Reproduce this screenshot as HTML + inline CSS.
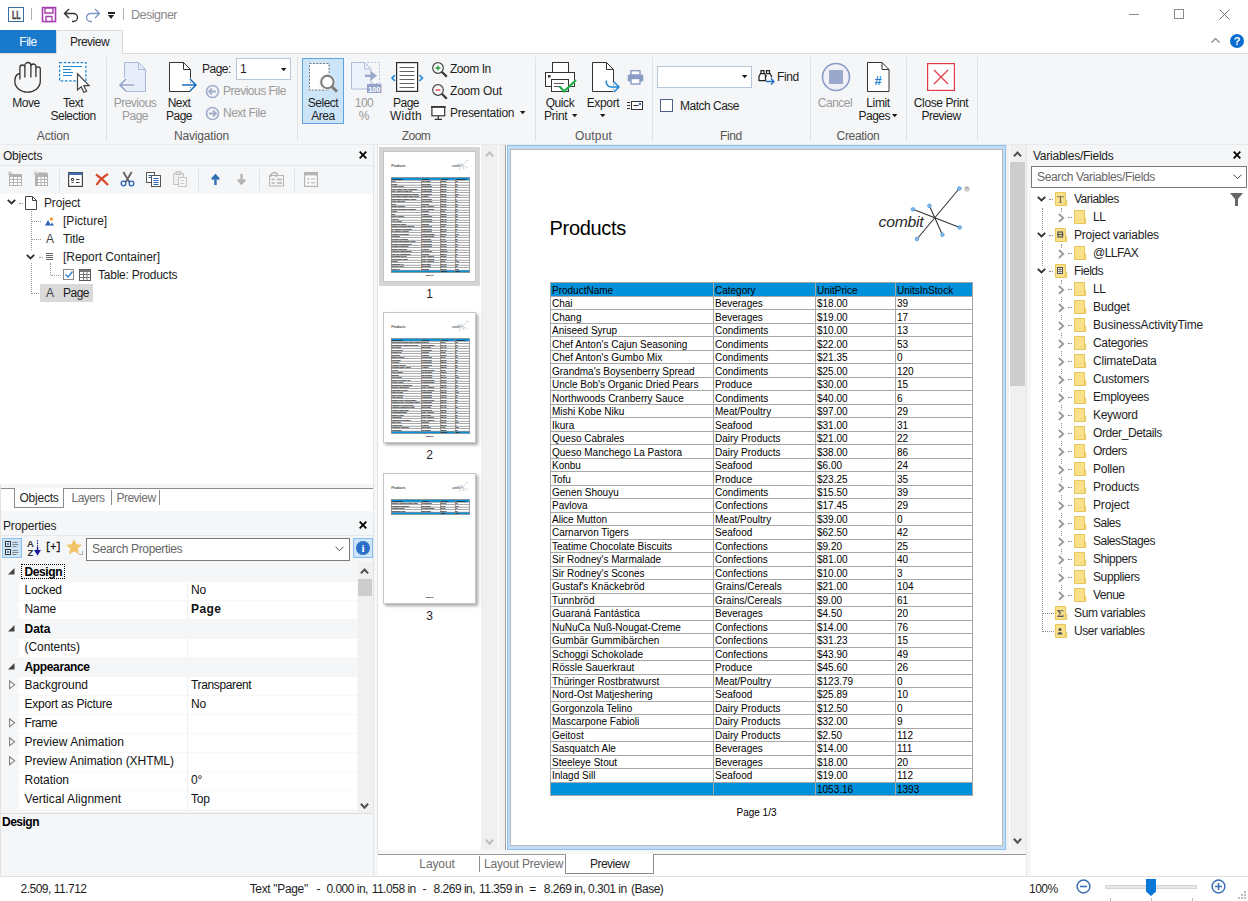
<!DOCTYPE html>
<html><head><meta charset="utf-8"><title>Designer</title>
<style>
*{box-sizing:border-box;margin:0;padding:0}
html,body{width:1248px;height:901px;overflow:hidden;background:#fff}
body{position:relative;font-family:"Liberation Sans",sans-serif;font-size:12px;color:#1e1e1e;letter-spacing:-0.2px}
.a{position:absolute}
.t{position:absolute;white-space:nowrap;line-height:14px}
.c{text-align:center}
.g{color:#9a9a9a}
svg{position:absolute;overflow:visible}
.b{font-weight:bold}
</style></head><body>
<!-- title bar -->
<div class="a" style="left:0;top:0;width:1248px;height:30px;background:#fff"></div>
<div class="a" style="left:8px;top:7px;width:16px;height:15px;border:1px solid #3b6ea5;background:#fff"></div>
<div class="t b" style="letter-spacing:0.6px;left:12px;top:8.500px;font-size:10.500px;line-height:13px;letter-spacing:0;color:#4a4a4a;transform:scaleX(.68);transform-origin:0 0;-webkit-text-stroke:.4px #4a4a4a">LL</div>
<div class="a" style="left:31px;top:8px;width:1px;height:12px;background:#b0b0b0"></div>
<svg style="left:42px;top:7px" width="14" height="15" viewBox="0 0 14 15"><path d="M.5.5h13v14H.5z" fill="#fff" stroke="#a63fb0" stroke-width="1.6"/><path d="M3 1h8v5H3z" fill="#fff" stroke="#a63fb0" stroke-width="1.4"/><path d="M4 9.5h6v5H4z" fill="#fff" stroke="#a63fb0" stroke-width="1.4"/></svg>
<svg style="left:63px;top:8px" width="16" height="14" viewBox="0 0 16 14"><path d="M6 1L1.5 5.5 6 10M2 5.500h8.500a4 4 0 0 1 0 8H9" fill="none" stroke="#333" stroke-width="1.4"/></svg>
<svg style="left:85px;top:8px" width="16" height="14" viewBox="0 0 16 14"><path d="M10 1l4.500 4.500L10 10M14 5.500H5.500a4 4 0 0 0 0 8H7" fill="none" stroke="#7f98c4" stroke-width="1.4"/></svg>
<div class="a" style="left:108px;top:12px;width:7px;height:1.5px;background:#222"></div>
<div class="a" style="left:108px;top:15px;width:0;height:0;border-left:3.5px solid transparent;border-right:3.5px solid transparent;border-top:4px solid #222"></div>
<div class="a" style="left:123px;top:8px;width:1px;height:12px;background:#b0b0b0"></div>
<div class="t" style="letter-spacing:-0.5px;left:131px;top:8px;color:#8a8a8a;font-size:12.500px">Designer</div>
<!-- window buttons -->
<div class="a" style="left:1129px;top:14px;width:10px;height:1px;background:#8a8a8a"></div>
<div class="a" style="left:1174px;top:9px;width:10px;height:10px;border:1px solid #8a8a8a"></div>
<svg style="left:1219px;top:9px" width="11" height="11" viewBox="0 0 11 11"><path d="M.5.5l10 10M10.500.5l-10 10" stroke="#777" stroke-width="1"/></svg>
<!-- tabs row -->
<div class="a" style="left:0;top:30px;width:56px;height:23px;background:#1979ca"></div>
<div class="t c" style="letter-spacing:-0.5px;left:0;top:35px;width:56px;color:#fff">File</div>
<div class="a" style="left:0;top:53px;width:1248px;height:92px;background:#f5f6f7;border-top:1px solid #dadbdc;border-bottom:1px solid #e9eaeb"></div>
<div class="a" style="left:56px;top:30px;width:67px;height:24px;background:#f5f6f7;border:1px solid #dadbdc;border-bottom:none"></div>
<div class="t c" style="letter-spacing:-0.5px;left:56px;top:35px;width:67px">Preview</div>
<svg style="left:1211px;top:37px" width="9" height="6" viewBox="0 0 9 6"><path d="M.5 5.500l4-4 4 4" fill="none" stroke="#888" stroke-width="1.200"/></svg>
<div class="a" style="left:1230px;top:34px;width:14px;height:14px;border-radius:7px;background:#0a6ccf"></div>
<div class="t b c" style="left:1230px;top:34px;width:14px;color:#fff;font-size:11px">?</div>
<!-- ribbon separators -->
<div class="a" style="left:106px;top:57px;width:1px;height:84px;background:#e1e2e3"></div>
<div class="a" style="left:297px;top:57px;width:1px;height:84px;background:#e1e2e3"></div>
<div class="a" style="left:535px;top:57px;width:1px;height:84px;background:#e1e2e3"></div>
<div class="a" style="left:652px;top:57px;width:1px;height:84px;background:#e1e2e3"></div>
<div class="a" style="left:810px;top:57px;width:1px;height:84px;background:#e1e2e3"></div>
<div class="a" style="left:906px;top:57px;width:1px;height:84px;background:#e1e2e3"></div>
<div class="a" style="left:977px;top:57px;width:1px;height:84px;background:#e1e2e3"></div>
<!-- group labels -->
<div class="t c" style="letter-spacing:-0.172px;left:0;top:129px;width:106px;color:#555">Action</div>
<div class="t c" style="letter-spacing:-0.189px;left:106px;top:129px;width:191px;color:#555">Navigation</div>
<div class="t c" style="letter-spacing:-0.5px;left:297px;top:129px;width:238px;color:#555">Zoom</div>
<div class="t c" style="letter-spacing:0.134px;left:535px;top:129px;width:117px;color:#555">Output</div>
<div class="t c" style="letter-spacing:-0.381px;left:652px;top:129px;width:158px;color:#555">Find</div>
<div class="t c" style="letter-spacing:-0.308px;left:810px;top:129px;width:96px;color:#555">Creation</div>
<!-- Action -->
<svg style="left:13.500px;top:61.500px" width="27" height="31" viewBox="0 0 27 31"><path d="M5.900 17V5.500a2.500 2.500 0 0 1 5 0M10.900 15V3.500a3 3 0 0 1 6 0V15M16.900 4.500a2.500 2.500 0 0 1 5 0V14.500M21.900 7a2.200 2.200 0 0 1 4.400 0V19C26.300 26 20 30.200 13.500 30.200C7 30.200.8 26 .8 19Q1 12.500 5.500 11.500" fill="none" stroke="#333" stroke-width="1.300" stroke-linecap="round"/></svg>
<div class="t c" style="letter-spacing:-0.5px;left:0;top:96px;width:52px">Move</div>
<svg style="left:59px;top:62px" width="32" height="32" viewBox="0 0 32 32"><rect x=".6" y=".6" width="26.300" height="18.300" fill="#fff" stroke="#1e86d0" stroke-width="1.200" stroke-dasharray="2.600 1.600"/><path d="M4 4.500h19M4 7.500h8M4 10.500h10M4 13.500h9" stroke="#1e86d0" stroke-width="1.100"/><path d="M18.500 11.800v16.200l3.700-3.200 2.700 5.700 2.700-1.300-2.800-5.500h5.300z" fill="#fff" stroke="#444" stroke-width="1.200"/></svg>
<div class="t c" style="letter-spacing:-0.5px;left:46px;top:96px;width:54px">Text</div>
<div class="t c" style="letter-spacing:-0.459px;left:46px;top:109px;width:54px">Selection</div>
<!-- Navigation -->
<svg style="left:118px;top:62px" width="30" height="31" viewBox="0 0 30 31"><path d="M6.500.5h14l7 7v22h-21z" fill="#e6ecf8" stroke="#a9b9da"/><path d="M20.500.5v7h7" fill="none" stroke="#a9b9da"/><path d="M16 23H2M8 17l-6 6 6 6" fill="none" stroke="#f5f6f7" stroke-width="4"/><path d="M16 23H2M8 17l-6 6 6 6" fill="none" stroke="#8fa3cc" stroke-width="1.600"/></svg>
<div class="t c g" style="letter-spacing:-0.5px;left:108px;top:96px;width:54px">Previous</div>
<div class="t c g" style="letter-spacing:-0.5px;left:108px;top:109px;width:54px">Page</div>
<svg style="left:168px;top:62px" width="30" height="31" viewBox="0 0 30 31"><path d="M1.500.5h14l7 7v22h-21z" fill="#fff" stroke="#333"/><path d="M15.500.5v7h7" fill="none" stroke="#333"/><path d="M14 23h14M22 17l6 6-6 6" fill="none" stroke="#fff" stroke-width="4"/><path d="M14 23h14M22 17l6 6-6 6" fill="none" stroke="#1e6fc0" stroke-width="1.600"/></svg>
<div class="t c" style="letter-spacing:-0.5px;left:158px;top:96px;width:42px">Next</div>
<div class="t c" style="letter-spacing:-0.5px;left:158px;top:109px;width:42px">Page</div>
<div class="t" style="letter-spacing:-0.5px;left:202px;top:62px">Page:</div>
<div class="a" style="left:236px;top:58px;width:55px;height:22px;background:#fff;border:1px solid #b8c6dc"></div>
<div class="t" style="left:240px;top:62px">1</div>
<svg style="left:281px;top:68px" width="6" height="4" viewBox="0 0 6 4"><path d="M0 0h5.400L2.700 3.200z" fill="#1a1a1a"/></svg>
<svg style="left:205.500px;top:84.500px" width="13" height="13" viewBox="0 0 13 13"><circle cx="6.500" cy="6.500" r="6" fill="none" stroke="#a3aecb" stroke-width="1.700"/><path d="M10 6.500H3.500M6 3.500l-3 3 3 3" fill="none" stroke="#a3aecb" stroke-width="1.800"/></svg>
<div class="t g" style="letter-spacing:-0.5px;left:223px;top:84px">Previous File</div>
<svg style="left:205.500px;top:106.500px" width="13" height="13" viewBox="0 0 13 13"><circle cx="6.500" cy="6.500" r="6" fill="none" stroke="#a3aecb" stroke-width="1.700"/><path d="M3 6.500h6.500M7 3.500l3 3-3 3" fill="none" stroke="#a3aecb" stroke-width="1.800"/></svg>
<div class="t g" style="letter-spacing:-0.5px;left:223px;top:106px">Next File</div>
<!-- Zoom -->
<div class="a" style="left:302px;top:58px;width:42px;height:66px;background:#cce4f7;border:1px solid #5fa3e0"></div>
<svg style="left:309px;top:63px" width="30" height="30" viewBox="0 0 30 30"><rect x=".5" y=".5" width="19.500" height="26.500" fill="#fff" stroke="#666" stroke-width=".9" stroke-dasharray="2 1.400"/><circle cx="18.400" cy="19" r="6.200" fill="#fff" stroke="#e8eef5" stroke-opacity=".8" stroke-width="4"/><circle cx="18.400" cy="19" r="6.200" fill="#fff" stroke="#7a7a7a" stroke-width="2"/><path d="M23 23.800l5 5" stroke="#7a7a7a" stroke-width="3"/></svg>
<div class="t c" style="letter-spacing:-0.5px;left:302px;top:96px;width:42px">Select</div>
<div class="t c" style="letter-spacing:-0.5px;left:302px;top:109px;width:42px">Area</div>
<svg style="left:351px;top:62px" width="31" height="32" viewBox="0 0 31 32"><rect x="16" y=".5" width="12.500" height="21" fill="none" stroke="#b5c0dc" stroke-dasharray="2 1.500"/><path d="M.5.500h13l6.500 6.500v20H.5z" fill="#eef2fb" stroke="#b0bcdc"/><path d="M13.500.5v6.500h6.500" fill="none" stroke="#b0bcdc"/><path d="M14 13.800h8" stroke="#9aa9cc" stroke-width="2.400"/><path d="M19.500 8.800l6.500 5-6.500 5z" fill="#9aa9cc"/><rect x="16" y="22" width="14.500" height="9" fill="#92a2c8"/><text x="23.300" y="29.700" font-size="8" font-weight="bold" fill="#fff" text-anchor="middle" font-family="Liberation Sans,sans-serif" textLength="12" lengthAdjust="spacingAndGlyphs">100</text></svg>
<div class="t c g" style="letter-spacing:-0.5px;left:344px;top:96px;width:40px">100</div>
<div class="t c g" style="left:344px;top:109px;width:40px">%</div>
<svg style="left:390px;top:62px" width="33" height="31" viewBox="0 0 33 31"><rect x="6.600" y=".6" width="21" height="28.800" fill="#fff" stroke="#2a2a2a" stroke-width="1.200"/><path d="M9.500 5.500h15M9.500 9.500h15M9.500 13.500h15M9.500 17.500h15M9.500 21.500h15M9.500 25.500h15" stroke="#666"/><path d="M5 13.200l-3 2.800 3 2.800M29.500 13.200l3 2.800-3 2.800" fill="none" stroke="#1e88d8" stroke-width="1.600"/></svg>
<div class="t c" style="letter-spacing:-0.5px;left:386px;top:96px;width:40px">Page</div>
<div class="t c" style="letter-spacing:0.253px;left:386px;top:109px;width:40px">Width</div>
<svg style="left:431.500px;top:61.700px" width="16" height="16" viewBox="0 0 16 16"><circle cx="6" cy="6" r="5.300" fill="#fff" stroke="#444" stroke-width="1.200"/><path d="M9.800 9.800l5 5" stroke="#333" stroke-width="2.200"/><path d="M3.500 6h5M6 3.500v5" stroke="#1e9e3a" stroke-width="1.300"/></svg>
<div class="t" style="letter-spacing:-0.469px;left:450px;top:62px">Zoom In</div>
<svg style="left:431.500px;top:83.700px" width="16" height="16" viewBox="0 0 16 16"><circle cx="6" cy="6" r="5.300" fill="#fff" stroke="#444" stroke-width="1.200"/><path d="M9.800 9.800l5 5" stroke="#333" stroke-width="2.200"/><path d="M3.500 6h5" stroke="#e03030" stroke-width="1.300"/></svg>
<div class="t" style="letter-spacing:-0.194px;left:450px;top:84px">Zoom Out</div>
<svg style="left:431.300px;top:106px" width="15" height="15" viewBox="0 0 15 15"><rect x=".9" y=".8" width="12.800" height="9" fill="#fff" stroke="#333" stroke-width="1.200"/><path d="M0 .9h14.600" stroke="#333" stroke-width="1.700"/><path d="M7.300 10v3.400M3.700 13.400h7.300" stroke="#333" stroke-width="1.200"/></svg>
<div class="t" style="letter-spacing:-0.263px;left:450px;top:106px">Presentation</div>
<svg style="left:519.700px;top:111px" width="6" height="4" viewBox="0 0 6 4"><path d="M0 0h5.400L2.700 3.200z" fill="#1a1a1a"/></svg>
<!-- Output -->
<svg style="left:545px;top:62px" width="32" height="31" viewBox="0 0 32 31"><rect x="7.500" y=".5" width="16" height="10" fill="#fff" stroke="#333"/><rect x=".5" y="10.500" width="29" height="14" fill="#fff" stroke="#333"/><rect x="3" y="13" width="2.500" height="2.500" fill="#333"/><rect x="6.500" y="17.500" width="17" height="12" fill="#fff" stroke="#333"/><path d="M9 21.500h10M9 24.500h7" stroke="#555"/><path d="M14.500 24.500l4.800 4.800L31 18" fill="none" stroke="#27ae4a" stroke-width="2.300"/></svg>
<div class="t c" style="letter-spacing:-0.422px;left:536px;top:96px;width:48px">Quick</div>
<div class="t" style="letter-spacing:-0.247px;left:544px;top:109px">Print</div>
<svg style="left:571.500px;top:114px" width="6" height="4" viewBox="0 0 6 4"><path d="M0 0h5.400L2.700 3.200z" fill="#1a1a1a"/></svg>
<svg style="left:591px;top:62px" width="30" height="31" viewBox="0 0 30 31"><path d="M1.500.5h14l7 7v22h-21z" fill="#fff" stroke="#333"/><path d="M15.500.5v7h7" fill="none" stroke="#333"/><path d="M15.300 18.500v1.500a5 5 0 0 0 5 5h7.500M23 20l5 5-5 5" fill="none" stroke="#f5f6f7" stroke-width="4"/><path d="M15.300 18.500v1.500a5 5 0 0 0 5 5h7.500M23 20l5 5-5 5" fill="none" stroke="#1e88d8" stroke-width="1.500"/></svg>
<div class="t c" style="letter-spacing:-0.337px;left:582px;top:96px;width:42px">Export</div>
<svg style="left:600px;top:114px" width="6" height="4" viewBox="0 0 6 4"><path d="M0 0h5.400L2.700 3.200z" fill="#1a1a1a"/></svg>
<svg style="left:627px;top:70px" width="17" height="15" viewBox="0 0 17 15"><rect x="4" y=".7" width="9" height="4.500" fill="#fff" stroke="#8a9bc4" stroke-width="1.400"/><rect x=".7" y="4.500" width="15.600" height="7" rx="1.500" fill="#8a9bc4"/><rect x="4" y="8.500" width="9" height="5.500" fill="#fff" stroke="#8a9bc4" stroke-width="1.400"/></svg>
<svg style="left:627px;top:100px" width="17" height="11" viewBox="0 0 17 11"><rect x="4.500" y="1.500" width="11" height="8" fill="#fff" stroke="#333"/><path d="M0 2.500h3M0 5.500h3M0 8.500h3M6.500 5.500h5" stroke="#333"/><rect x="12" y="3" width="2" height="2" fill="#1e6fc0"/></svg>
<!-- Find -->
<div class="a" style="left:657px;top:66px;width:95px;height:22px;background:#fff;border:1px solid #b8c6dc"></div>
<svg style="left:742px;top:75px" width="6" height="4" viewBox="0 0 6 4"><path d="M0 0h5.400L2.700 3.200z" fill="#1a1a1a"/></svg>
<svg style="left:758px;top:69px" width="17" height="16" viewBox="0 0 17 16"><path d="M3 1.500h3v3H3zM8.500 1.500h3v3h-3zM2.500 4.500h4l1 2v5h-6.500v-4zM8 4.500h4l1.500 3v1" fill="#fff" stroke="#222" stroke-width="1.250"/><path d="M7.500 7h1.500" stroke="#222"/><path d="M8 12.500h8M13 9.500l3 3-3 3" fill="none" stroke="#1e6fc0" stroke-width="1.300"/></svg>
<div class="t" style="letter-spacing:-0.381px;left:777px;top:70px">Find</div>
<div class="a" style="left:660px;top:99px;width:13px;height:13px;background:#fff;border:1px solid #4a5f8a"></div>
<div class="t" style="letter-spacing:-0.5px;left:680px;top:99px">Match Case</div>
<!-- Creation -->
<svg style="left:821px;top:62px" width="30" height="30" viewBox="0 0 30 30"><circle cx="15" cy="15" r="13.500" fill="#f0f2f8" stroke="#8a9bc4" stroke-width="1.600"/><rect x="8" y="8" width="14" height="14" fill="#9aa8cc"/></svg>
<div class="t c g" style="letter-spacing:-0.5px;left:812px;top:96px;width:46px">Cancel</div>
<svg style="left:867px;top:62px" width="23" height="31" viewBox="0 0 23 31"><path d="M.5.500h14.500l7 7v22H.5z" fill="#fff" stroke="#333"/><path d="M15 .5v7h7" fill="none" stroke="#333"/><text x="11" y="23" font-size="13" font-weight="bold" fill="#1e7fd0" text-anchor="middle" font-family="Liberation Sans,sans-serif">#</text></svg>
<div class="t c" style="letter-spacing:-0.411px;left:856px;top:96px;width:44px">Limit</div>
<div class="t" style="letter-spacing:-0.5px;left:858.500px;top:109px">Pages</div>
<svg style="left:892.200px;top:114px" width="6" height="4" viewBox="0 0 6 4"><path d="M0 0h5.400L2.700 3.200z" fill="#1a1a1a"/></svg>
<svg style="left:927px;top:63px" width="28" height="28" viewBox="0 0 28 28"><rect x=".6" y=".6" width="26.800" height="26.800" fill="#fff" stroke="#e03c4c" stroke-width="1.200"/><path d="M7 7l14 14M21 7L7 21" stroke="#e03c4c" stroke-width="1.300"/></svg>
<div class="t c" style="letter-spacing:-0.399px;left:908px;top:96px;width:66px">Close Print</div>
<div class="t c" style="letter-spacing:-0.5px;left:908px;top:109px;width:66px">Preview</div>
<!-- workspace bg -->
<div class="a" style="left:0;top:145px;width:1248px;height:732px;background:#f0f0f0"></div>
<!-- Objects panel -->
<div class="a" style="left:0;top:145px;width:374px;height:339px;background:#fff;border-right:1px solid #e3e4e6"></div>
<div class="a" style="left:0;top:145px;width:373px;height:21px;background:#f5f6f7"></div>
<div class="t" style="letter-spacing:-0.215px;left:3px;top:149px">Objects</div>
<svg style="left:359px;top:151px" width="8" height="8" viewBox="0 0 8 8"><path d="M.7.7l6.600 6.600M7.300.7L.7 7.300" stroke="#000" stroke-width="1.800"/></svg>
<div class="a" style="left:0;top:165px;width:373px;height:29px;background:#f5f6f7;border-top:1px solid #e6e7e8"></div>
<!-- toolbar icons -->
<svg style="left:7px;top:171px" width="16" height="16" viewBox="0 0 16 16"><rect x="2.500" y="3.500" width="12" height="11" fill="#fff" stroke="#b2b2b2"/><rect x="2.500" y="3.500" width="12" height="2.500" fill="#b2b2b2"/><path d="M2.500 8.500h12M2.500 11.500h12M6.500 6v8.500M10.500 6v8.500" stroke="#b2b2b2"/><path d="M3 0v5M.5 2.500h5M1.200.8l3.600 3.400M4.800.8L1.200 4.200" stroke="#bcbcbc" stroke-width=".7"/></svg>
<svg style="left:33px;top:171px" width="16" height="16" viewBox="0 0 16 16"><rect x="2.500" y="3.500" width="12" height="11" fill="#fff" stroke="#b2b2b2"/><rect x="5" y="1.500" width="9.500" height="2" fill="#b2b2b2"/><rect x="2.500" y="3.500" width="12" height="2.500" fill="#b2b2b2"/><rect x="2.500" y="3.500" width="2.500" height="11" fill="#b2b2b2"/><path d="M2.500 8.500h12M2.500 11.500h12M8 6v8.500M11.500 6v8.500" stroke="#b2b2b2"/><path d="M3 0v5M.5 2.500h5M1.200.8l3.600 3.400M4.800.8L1.200 4.200" stroke="#bcbcbc" stroke-width=".7"/></svg>
<div class="a" style="left:59px;top:169px;width:1px;height:22px;background:#e1e2e3"></div>
<svg style="left:68px;top:172px" width="15" height="15" viewBox="0 0 15 15"><rect x=".6" y=".6" width="13.800" height="13.800" fill="#fff" stroke="#444" stroke-width="1.200"/><rect x=".6" y=".6" width="13.800" height="2.400" fill="#3f6fb0"/><path d="M3.500 6.500h2v2h-2zM3.500 10.500h2M8 7.500h3.500M8 10.500h3.500" fill="none" stroke="#444"/></svg>
<svg style="left:95px;top:173px" width="14" height="13" viewBox="0 0 14 13"><path d="M1 1.500c4 2.500 8 6 12 10.500M13 1C8 4 4 8 1.500 12" fill="none" stroke="#d9482b" stroke-width="2.200"/></svg>
<svg style="left:120px;top:171px" width="15" height="16" viewBox="0 0 15 16"><path d="M3.300 1l6 10M11.700 1l-6 10" stroke="#666" stroke-width="1.900"/><circle cx="3.500" cy="12.500" r="2.300" fill="none" stroke="#2a62b8" stroke-width="1.300"/><circle cx="11.500" cy="12.500" r="2.300" fill="none" stroke="#2a62b8" stroke-width="1.300"/></svg>
<svg style="left:146px;top:172px" width="16" height="15" viewBox="0 0 16 15"><rect x=".5" y=".5" width="8" height="10" fill="#fff" stroke="#555"/><path d="M2.500 3.500h4M2.500 5.500h4" stroke="#2a62b8"/><rect x="5.500" y="3.500" width="9" height="11" fill="#fff" stroke="#555"/><path d="M7.500 6.500h5M7.500 8.500h5M7.500 10.500h5M7.500 12.500h5" stroke="#2a62b8"/></svg>
<svg style="left:173px;top:171px" width="14" height="16" viewBox="0 0 14 16"><rect x=".5" y="2.500" width="10" height="11" fill="#eee" stroke="#c4c4c4"/><rect x="3" y=".5" width="5" height="3" fill="#ddd" stroke="#c4c4c4"/><rect x="5.500" y="6.500" width="8" height="9" fill="#f6f6f6" stroke="#c4c4c4"/><path d="M7.500 9.500h4M7.500 12.500h4" stroke="#ccc"/></svg>
<div class="a" style="left:198px;top:169px;width:1px;height:22px;background:#e1e2e3"></div>
<svg style="left:210.500px;top:174px" width="9" height="11" viewBox="0 0 9 11"><path d="M4.500 11V2.500M1 5.400L4.500 1.600 8 5.400" fill="none" stroke="#2f6db5" stroke-width="2.400"/></svg>
<svg style="left:236.500px;top:174px" width="9" height="11" viewBox="0 0 9 11"><path d="M4.500 0v8.500M1 5.600L4.500 9.400 8 5.600" fill="none" stroke="#b4b4b4" stroke-width="2.400"/></svg>
<div class="a" style="left:259px;top:169px;width:1px;height:22px;background:#e1e2e3"></div>
<svg style="left:269px;top:171px" width="16" height="16" viewBox="0 0 16 16"><rect x=".5" y="4.500" width="14" height="10.500" fill="#f4f4f4" stroke="#b4b4b4"/><path d="M1.500 6a4 4 0 0 1 6.500-3.500" fill="none" stroke="#b4b4b4" stroke-width="1.300"/><path d="M5.500 1.500l3 1.500-1.500 3" fill="none" stroke="#b4b4b4" stroke-width="1.300"/><path d="M2.500 8.500h3M8 8.500h5M2.500 12h3M8 12h5" stroke="#b4b4b4" stroke-width="1.600"/></svg>
<div class="a" style="left:294px;top:169px;width:1px;height:22px;background:#e1e2e3"></div>
<svg style="left:304px;top:172px" width="15" height="15" viewBox="0 0 15 15"><rect x=".6" y=".6" width="12.800" height="13.800" fill="#fafafa" stroke="#b4b4b4" stroke-width="1.200"/><rect x=".6" y=".6" width="12.800" height="2.800" fill="#b4b4b4"/><circle cx="4.300" cy="7" r="1" fill="#b4b4b4"/><circle cx="4.300" cy="10.800" r=".9" fill="none" stroke="#b4b4b4" stroke-width=".7"/><path d="M7 7h4M7 10.800h4" stroke="#b4b4b4"/></svg>
<!-- tree -->
<svg style="left:7px;top:199px" width="9" height="6" viewBox="0 0 9 6"><path d="M.8.800l3.700 3.700L8.200.8" fill="none" stroke="#333" stroke-width="1.900"/></svg>
<svg style="left:25px;top:196px" width="12" height="14" viewBox="0 0 12 14"><path d="M.5.500h7l4 4v9H.5z" fill="#fff" stroke="#444"/><path d="M7.500.5v4h4" fill="none" stroke="#444"/></svg>
<div class="t" style="letter-spacing:-0.177px;left:44px;top:196px">Project</div>
<div class="a" style="left:31px;top:211px;width:0;height:83px;border-left:1px dotted #9a9a9a"></div>
<div class="a" style="left:19px;top:203px;width:4px;height:0;border-top:1px dotted #9a9a9a"></div>
<div class="a" style="left:32px;top:221px;width:9px;height:0;border-top:1px dotted #9a9a9a"></div>
<div class="a" style="left:32px;top:239px;width:9px;height:0;border-top:1px dotted #9a9a9a"></div>
<div class="a" style="left:39px;top:257px;width:4px;height:0;border-top:1px dotted #9a9a9a"></div>
<div class="a" style="left:32px;top:293px;width:9px;height:0;border-top:1px dotted #9a9a9a"></div>
<svg style="left:45px;top:217px" width="9" height="9" viewBox="0 0 9 9"><circle cx="6.500" cy="2" r="1.700" fill="#f0a030"/><path d="M0 8.500L3 3l3 5.500z" fill="#2a62b8"/><path d="M5 8.500L7 5.500l2 3z" fill="#2a62b8"/></svg>
<div class="t" style="letter-spacing:0.023px;left:63px;top:214px">[Picture]</div>
<div class="t" style="left:46px;top:232px;color:#444">A</div>
<div class="t" style="letter-spacing:-0.159px;left:63px;top:232px">Title</div>
<div class="a" style="left:25px;top:251px;width:11px;height:11px;background:#fff"></div><svg style="left:26px;top:254px" width="9" height="6" viewBox="0 0 9 6"><path d="M.8.800l3.700 3.700L8.200.8" fill="none" stroke="#333" stroke-width="1.900"/></svg>
<svg style="left:46px;top:253px" width="8" height="8" viewBox="0 0 8 8"><path d="M0 .5h7M0 2.500h7M0 4.500h7M0 6.500h7" stroke="#555" stroke-width=".9"/></svg>
<div class="t" style="letter-spacing:-0.057px;left:63px;top:250px">[Report Container]</div>
<div class="a" style="left:50px;top:263px;width:0;height:12px;border-left:1px dotted #9a9a9a"></div>
<div class="a" style="left:51px;top:275px;width:10px;height:0;border-top:1px dotted #9a9a9a"></div>
<div class="a" style="left:63px;top:269px;width:11px;height:11px;background:#fff;border:1px solid #8a8a8a"></div>
<svg style="left:65px;top:271px" width="8" height="7" viewBox="0 0 8 7"><path d="M.5 3.500l2.500 2.500L7.500.5" fill="none" stroke="#2a7fd8" stroke-width="1.300"/></svg>
<svg style="left:79px;top:269px" width="12" height="12" viewBox="0 0 12 12"><rect x=".5" y=".5" width="11" height="11" fill="#fff" stroke="#555"/><rect x=".5" y=".5" width="11" height="2.500" fill="#777"/><path d="M.5 5.500h11M.5 8.500h11M4.500 3v8.500M8 3v8.500" stroke="#777"/></svg>
<div class="t" style="letter-spacing:-0.23px;left:98px;top:268px">Table: Products</div>
<div class="a" style="left:40px;top:284px;width:53px;height:18px;background:#d9d9d9"></div>
<div class="t" style="left:46px;top:286px;color:#444">A</div>
<div class="t" style="letter-spacing:-0.5px;left:63px;top:286px">Page</div>
<!-- objects tabs -->
<div class="a" style="left:0;top:484px;width:374px;height:27px;background:#fff;border-right:1px solid #e3e4e6"></div>
<div class="a" style="left:0;top:484px;width:373px;height:4px;background:#f5f6f7"></div>
<div class="a" style="left:0;top:488px;width:373px;height:1px;background:#8c8c8c"></div>
<div class="a" style="left:14px;top:488px;width:50px;height:20px;background:#fff;border:1px solid #8c8c8c;border-top:none"></div>
<div class="t c" style="letter-spacing:-0.215px;left:14px;top:491px;width:50px">Objects</div>
<div class="t c" style="letter-spacing:-0.5px;left:66px;top:491px;width:44px;color:#6e6e6e">Layers</div>
<div class="a" style="left:111px;top:490px;width:1px;height:15px;background:#8c8c8c"></div>
<div class="t c" style="letter-spacing:-0.5px;left:113px;top:491px;width:46px;color:#6e6e6e">Preview</div>
<div class="a" style="left:159px;top:490px;width:1px;height:15px;background:#8c8c8c"></div>
<!-- Properties panel -->
<div class="a" style="left:0;top:514px;width:374px;height:362px;background:#f5f6f7;border-right:1px solid #e3e4e6"></div>
<div class="a" style="left:0;top:511px;width:374px;height:3px;background:#f5f6f7"></div>
<div class="t" style="letter-spacing:-0.134px;left:3px;top:519px">Properties</div>
<svg style="left:359px;top:521px" width="8" height="8" viewBox="0 0 8 8"><path d="M.7.700l6.600 6.600M7.300.7L.7 7.300" stroke="#000" stroke-width="1.800"/></svg>
<div class="a" style="left:0;top:535px;width:373px;height:1px;background:#e6e7e8"></div>
<div class="a" style="left:2px;top:538px;width:20px;height:20px;background:#cce4f7;border:1px solid #8cc0ee"></div>
<svg style="left:5px;top:541px" width="15" height="14" viewBox="0 0 15 14"><rect x=".5" y=".5" width="5" height="5" fill="#fff" stroke="#333"/><rect x=".5" y="8.500" width="5" height="5" fill="#fff" stroke="#333"/><path d="M1.500 3h3M3 1.500v3M1.500 11h3M3 9.500v3" stroke="#2a62b8"/><path d="M7.500 1.500h5M7.500 3.500h6M7.500 5.500h4M7.500 9.500h5M7.500 11.500h6M7.500 13.500h4" stroke="#777" stroke-width=".9"/></svg>
<div class="t b" style="left:27px;top:540px;font-size:9.500px;line-height:8px;color:#333;letter-spacing:0">A</div><div class="t b" style="left:27.500px;top:548.500px;font-size:9.500px;line-height:8px;color:#333;letter-spacing:0">Z</div>
<svg style="left:34px;top:540px" width="7" height="16" viewBox="0 0 7 16"><path d="M3.500 0v8" stroke="#1a1a9a" stroke-width="1" stroke-dasharray="1.500 1"/><path d="M3.500 7v7" stroke="#1a1a9a" stroke-width="1.500"/><path d="M0 10l3.500 5.500L7 10z" fill="#1a1a9a"/></svg>
<div class="t b" style="left:45px;top:541px;font-size:10px;line-height:13px;font-weight:normal;-webkit-text-stroke:.3px #111;font-family:'Liberation Mono',monospace;letter-spacing:-.7px;color:#111">[+]</div>
<svg style="left:66px;top:539px" width="18" height="17" viewBox="0 0 18 17"><path d="M8 0l2.400 5.200 5.600.6-4.200 3.800 1.200 5.600L8 12.400 3 15.200l1.200-5.600L0 5.800l5.600-.6z" fill="#f2c46a"/><path d="M13 15.500h3.500V12" fill="none" stroke="#999" stroke-width=".8"/></svg>
<div class="a" style="left:86px;top:538px;width:264px;height:23px;background:#fff;border:1px solid #7a7a7a"></div>
<div class="t" style="letter-spacing:-0.34px;left:92px;top:542px;color:#666">Search Properties</div>
<svg style="left:335px;top:546px" width="9" height="6" viewBox="0 0 9 6"><path d="M.5.700l4 4 4-4" fill="none" stroke="#444" stroke-width="1"/></svg>
<div class="a" style="left:353px;top:538px;width:20px;height:20px;background:#cce4f7;border:1px solid #8cc0ee"></div>
<div class="a" style="left:356px;top:541px;width:14px;height:14px;border-radius:7px;background:#2a6fc8"></div>
<div class="t b c" style="left:356px;top:541px;width:14px;color:#fff;font-size:11px;font-family:'Liberation Serif',serif">i</div>
<div class="a" style="left:0;top:562px;width:357px;height:247px;background:#f5f6f7"></div>
<svg style="left:8px;top:568px" width="7" height="7" viewBox="0 0 7 7"><path d="M6.500 0v6.500H0z" fill="#444"/></svg>
<div class="t b" style="letter-spacing:-0.403px;left:24.500px;top:565px;color:#000">Design</div>
<div class="a" style="left:19px;top:582px;width:338px;height:18px;background:#fff"></div>
<div class="a" style="left:187px;top:582px;width:1px;height:18px;background:#f0f0f0"></div>
<div class="t" style="letter-spacing:-0.241px;left:24.500px;top:583px;color:#111">Locked</div>
<div class="t" style="left:191px;top:583px;color:#111">No</div>
<div class="a" style="left:19px;top:601px;width:338px;height:18px;background:#fff"></div>
<div class="a" style="left:187px;top:601px;width:1px;height:18px;background:#f0f0f0"></div>
<div class="t" style="letter-spacing:-0.105px;left:24.500px;top:602px;color:#111">Name</div>
<div class="t b" style="letter-spacing:0.438px;left:191px;top:602px;color:#111">Page</div>
<svg style="left:8px;top:625px" width="7" height="7" viewBox="0 0 7 7"><path d="M6.500 0v6.500H0z" fill="#444"/></svg>
<div class="t b" style="letter-spacing:-0.039px;left:24.500px;top:622px;color:#000">Data</div>
<div class="a" style="left:19px;top:639px;width:338px;height:18px;background:#fff"></div>
<div class="a" style="left:187px;top:639px;width:1px;height:18px;background:#f0f0f0"></div>
<div class="t" style="letter-spacing:-0.059px;left:24.500px;top:640px;color:#111">(Contents)</div>
<svg style="left:8px;top:663px" width="7" height="7" viewBox="0 0 7 7"><path d="M6.500 0v6.500H0z" fill="#444"/></svg>
<div class="t b" style="letter-spacing:-0.356px;left:24.500px;top:660px;color:#000">Appearance</div>
<div class="a" style="left:19px;top:677px;width:338px;height:18px;background:#fff"></div>
<div class="a" style="left:187px;top:677px;width:1px;height:18px;background:#f0f0f0"></div>
<svg style="left:9px;top:680px" width="7" height="10" viewBox="0 0 7 10"><path d="M.6.900v7.800L5.600 4.800z" fill="#fff" stroke="#7a7a7a" stroke-width="1.050"/></svg>
<div class="t" style="letter-spacing:-0.061px;left:24.500px;top:678px;color:#111">Background</div>
<div class="t" style="letter-spacing:-0.367px;left:191px;top:678px;color:#111">Transparent</div>
<div class="a" style="left:19px;top:696px;width:338px;height:18px;background:#fff"></div>
<div class="a" style="left:187px;top:696px;width:1px;height:18px;background:#f0f0f0"></div>
<div class="t" style="letter-spacing:-0.211px;left:24.500px;top:697px;color:#111">Export as Picture</div>
<div class="t" style="left:191px;top:697px;color:#111">No</div>
<div class="a" style="left:19px;top:715px;width:338px;height:18px;background:#fff"></div>
<div class="a" style="left:187px;top:715px;width:1px;height:18px;background:#f0f0f0"></div>
<svg style="left:9px;top:718px" width="7" height="10" viewBox="0 0 7 10"><path d="M.6.900v7.800L5.600 4.800z" fill="#fff" stroke="#7a7a7a" stroke-width="1.050"/></svg>
<div class="t" style="letter-spacing:-0.418px;left:24.500px;top:716px;color:#111">Frame</div>
<div class="a" style="left:19px;top:734px;width:338px;height:18px;background:#fff"></div>
<div class="a" style="left:187px;top:734px;width:1px;height:18px;background:#f0f0f0"></div>
<svg style="left:9px;top:737px" width="7" height="10" viewBox="0 0 7 10"><path d="M.6.900v7.800L5.600 4.800z" fill="#fff" stroke="#7a7a7a" stroke-width="1.050"/></svg>
<div class="t" style="letter-spacing:0.049px;left:24.500px;top:735px;color:#111">Preview Animation</div>
<div class="a" style="left:19px;top:753px;width:338px;height:18px;background:#fff"></div>
<div class="a" style="left:187px;top:753px;width:1px;height:18px;background:#f0f0f0"></div>
<svg style="left:9px;top:756px" width="7" height="10" viewBox="0 0 7 10"><path d="M.6.900v7.800L5.600 4.800z" fill="#fff" stroke="#7a7a7a" stroke-width="1.050"/></svg>
<div class="t" style="letter-spacing:-0.051px;left:24.500px;top:754px;color:#111">Preview Animation (XHTML)</div>
<div class="a" style="left:19px;top:772px;width:338px;height:18px;background:#fff"></div>
<div class="a" style="left:187px;top:772px;width:1px;height:18px;background:#f0f0f0"></div>
<div class="t" style="letter-spacing:-0.029px;left:24.500px;top:773px;color:#111">Rotation</div>
<div class="t" style="left:191px;top:773px;color:#111">0°</div>
<div class="a" style="left:19px;top:791px;width:338px;height:18px;background:#fff"></div>
<div class="a" style="left:187px;top:791px;width:1px;height:18px;background:#f0f0f0"></div>
<div class="t" style="letter-spacing:0.065px;left:24.500px;top:792px;color:#111">Vertical Alignment</div>
<div class="t" style="left:191px;top:792px;color:#111">Top</div>
<div class="a" style="left:19px;top:600px;width:338px;height:1px;background:#f7f7f8"></div>
<div class="a" style="left:19px;top:657px;width:338px;height:1px;background:#f7f7f8"></div>
<div class="a" style="left:19px;top:695px;width:338px;height:1px;background:#f7f7f8"></div>
<div class="a" style="left:19px;top:714px;width:338px;height:1px;background:#f7f7f8"></div>
<div class="a" style="left:19px;top:733px;width:338px;height:1px;background:#f7f7f8"></div>
<div class="a" style="left:19px;top:752px;width:338px;height:1px;background:#f7f7f8"></div>
<div class="a" style="left:19px;top:771px;width:338px;height:1px;background:#f7f7f8"></div>
<div class="a" style="left:19px;top:790px;width:338px;height:1px;background:#f7f7f8"></div>
<div class="a" style="left:19px;top:809px;width:338px;height:1px;background:#f7f7f8"></div>
<div class="a" style="left:21px;top:564px;width:44px;height:15px;border:1px dotted #000"></div>
<div class="a" style="left:358px;top:562px;width:15px;height:252px;background:#f0f0f0"></div>
<svg style="left:360px;top:568px" width="9" height="6" viewBox="0 0 9 6"><path d="M.9 5.400l3.600-3.900 3.600 3.900" fill="none" stroke="#505050" stroke-width="2"/></svg>
<div class="a" style="left:358px;top:579px;width:14px;height:17px;background:#cdcdcd"></div>
<svg style="left:360px;top:803px" width="9" height="6" viewBox="0 0 9 6"><path d="M.9 .8l3.600 3.900 3.600-3.900" fill="none" stroke="#505050" stroke-width="2"/></svg>
<div class="a" style="left:0;top:813px;width:373px;height:1px;background:#e0e0e0"></div>
<div class="t b" style="letter-spacing:-0.5px;left:2px;top:815px;color:#000">Design</div>
<div class="a" style="left:0;top:484px;width:1px;height:392px;background:#e2e2e2"></div>
<style>.pt{font-size:10px;line-height:13px;color:#000;letter-spacing:0}.pg{position:absolute;width:491px;height:695px;background:#fff;overflow:hidden}.th{transform:scale(.1853);transform-origin:0 0}.th .ti{margin-top:-10px}.th .pt{-webkit-text-stroke:.5px #222}.l{background:#a6a6a6}.th .l{background:#8c8c8c;box-shadow:0 0 0 1.400px #8c8c8c}</style>
<!-- thumbnails -->
<div class="a" style="left:374px;top:145px;width:4px;height:732px;background:#f5f6f7"></div>
<div class="a" style="left:377px;top:145px;width:1px;height:709px;background:#e3e4e6"></div>
<div class="a" style="left:378px;top:145px;width:103px;height:709px;background:#fff"></div>
<div class="a" style="left:481px;top:145px;width:17px;height:709px;background:#f0f0f0"></div>
<div class="a" style="left:498px;top:145px;width:1px;height:709px;background:#fff"></div>
<svg style="left:485px;top:151px" width="9" height="6" viewBox="0 0 9 6"><path d="M.9 5.400l3.600-3.900 3.600 3.900" fill="none" stroke="#bdbdbd" stroke-width="2"/></svg>
<svg style="left:485px;top:839px" width="9" height="6" viewBox="0 0 9 6"><path d="M.9 .8l3.600 3.900 3.600-3.900" fill="none" stroke="#bdbdbd" stroke-width="2"/></svg>
<div class="a" style="left:379px;top:147px;width:101px;height:139px;background:#d5d5d5"></div>
<div class="a" style="left:383px;top:151px;width:93px;height:131px;background:#fff"></div>
<div class="pg th" style="left:384.2px;top:152.7px"><div class="t ti" style="left:38.500px;top:64.500px;font-size:20px;line-height:26px;color:#000;letter-spacing:-.3px">Products</div>
<svg style="left:360px;top:30px" width="110" height="70" viewBox="360 30 110 70"><g stroke="#333" stroke-width="1.050" fill="none"><path d="M406 89L448.300 38.500M402 59.300L448.700 77.400M418.400 55.800L431.400 84.700"/></g><g fill="#7db8ea" stroke="#4a94d6" stroke-width=".6"><circle cx="448.300" cy="38.500" r="1.900"/><circle cx="402" cy="59.300" r="1.900"/><circle cx="418.400" cy="55.800" r="1.900"/><circle cx="406" cy="89" r="1.900"/><circle cx="431.400" cy="84.700" r="1.900"/><circle cx="448.700" cy="77.400" r="1.900"/></g><circle cx="456" cy="39" r="2.200" fill="none" stroke="#777" stroke-width=".6"/><text x="456" y="40.400" font-size="3.500" text-anchor="middle" fill="#555" font-family="Liberation Sans,sans-serif">R</text><text x="367.500" y="77.200" font-size="14" font-style="italic" fill="#2a2a2a" font-family="Liberation Sans,sans-serif" textLength="45" lengthAdjust="spacingAndGlyphs">combit</text></svg>
<div class="a" style="left:39px;top:132px;width:423px;height:14px;background:#0091db"></div>
<div class="a" style="left:39px;top:632px;width:423px;height:13px;background:#0091db"></div>
<div class="a l" style="left:39px;top:132px;width:423px;height:1px"></div>
<div class="a l" style="left:39px;top:146px;width:423px;height:1px"></div>
<div class="a l" style="left:39px;top:159px;width:423px;height:1px"></div>
<div class="a l" style="left:39px;top:173px;width:423px;height:1px"></div>
<div class="a l" style="left:39px;top:186px;width:423px;height:1px"></div>
<div class="a l" style="left:39px;top:200px;width:423px;height:1px"></div>
<div class="a l" style="left:39px;top:213px;width:423px;height:1px"></div>
<div class="a l" style="left:39px;top:227px;width:423px;height:1px"></div>
<div class="a l" style="left:39px;top:240px;width:423px;height:1px"></div>
<div class="a l" style="left:39px;top:254px;width:423px;height:1px"></div>
<div class="a l" style="left:39px;top:267px;width:423px;height:1px"></div>
<div class="a l" style="left:39px;top:281px;width:423px;height:1px"></div>
<div class="a l" style="left:39px;top:294px;width:423px;height:1px"></div>
<div class="a l" style="left:39px;top:308px;width:423px;height:1px"></div>
<div class="a l" style="left:39px;top:321px;width:423px;height:1px"></div>
<div class="a l" style="left:39px;top:335px;width:423px;height:1px"></div>
<div class="a l" style="left:39px;top:348px;width:423px;height:1px"></div>
<div class="a l" style="left:39px;top:362px;width:423px;height:1px"></div>
<div class="a l" style="left:39px;top:375px;width:423px;height:1px"></div>
<div class="a l" style="left:39px;top:389px;width:423px;height:1px"></div>
<div class="a l" style="left:39px;top:402px;width:423px;height:1px"></div>
<div class="a l" style="left:39px;top:416px;width:423px;height:1px"></div>
<div class="a l" style="left:39px;top:429px;width:423px;height:1px"></div>
<div class="a l" style="left:39px;top:443px;width:423px;height:1px"></div>
<div class="a l" style="left:39px;top:456px;width:423px;height:1px"></div>
<div class="a l" style="left:39px;top:470px;width:423px;height:1px"></div>
<div class="a l" style="left:39px;top:483px;width:423px;height:1px"></div>
<div class="a l" style="left:39px;top:497px;width:423px;height:1px"></div>
<div class="a l" style="left:39px;top:510px;width:423px;height:1px"></div>
<div class="a l" style="left:39px;top:524px;width:423px;height:1px"></div>
<div class="a l" style="left:39px;top:537px;width:423px;height:1px"></div>
<div class="a l" style="left:39px;top:551px;width:423px;height:1px"></div>
<div class="a l" style="left:39px;top:564px;width:423px;height:1px"></div>
<div class="a l" style="left:39px;top:578px;width:423px;height:1px"></div>
<div class="a l" style="left:39px;top:591px;width:423px;height:1px"></div>
<div class="a l" style="left:39px;top:605px;width:423px;height:1px"></div>
<div class="a l" style="left:39px;top:618px;width:423px;height:1px"></div>
<div class="a l" style="left:39px;top:632px;width:423px;height:1px"></div>
<div class="a l" style="left:39px;top:645px;width:423px;height:1px"></div>
<div class="a l" style="left:39px;top:132px;width:1px;height:514px"></div>
<div class="a l" style="left:202px;top:132px;width:1px;height:514px"></div>
<div class="a l" style="left:304px;top:132px;width:1px;height:514px"></div>
<div class="a l" style="left:384px;top:132px;width:1px;height:514px"></div>
<div class="a l" style="left:461px;top:132px;width:1px;height:514px"></div>
<div class="t pt" style="left:41px;top:134px">ProductName</div><div class="t pt" style="left:204px;top:134px">Category</div><div class="t pt" style="left:306px;top:134px">UnitPrice</div><div class="t pt" style="left:386px;top:134px">UnitsInStock</div>
<div class="t pt" style="left:41px;top:147px">Chai</div><div class="t pt" style="left:204px;top:147px">Beverages</div><div class="t pt" style="left:306px;top:147px">$18.00</div><div class="t pt" style="left:386px;top:147px">39</div>
<div class="t pt" style="left:41px;top:161px">Chang</div><div class="t pt" style="left:204px;top:161px">Beverages</div><div class="t pt" style="left:306px;top:161px">$19.00</div><div class="t pt" style="left:386px;top:161px">17</div>
<div class="t pt" style="left:41px;top:174px">Aniseed Syrup</div><div class="t pt" style="left:204px;top:174px">Condiments</div><div class="t pt" style="left:306px;top:174px">$10.00</div><div class="t pt" style="left:386px;top:174px">13</div>
<div class="t pt" style="left:41px;top:188px">Chef Anton's Cajun Seasoning</div><div class="t pt" style="left:204px;top:188px">Condiments</div><div class="t pt" style="left:306px;top:188px">$22.00</div><div class="t pt" style="left:386px;top:188px">53</div>
<div class="t pt" style="left:41px;top:201px">Chef Anton's Gumbo Mix</div><div class="t pt" style="left:204px;top:201px">Condiments</div><div class="t pt" style="left:306px;top:201px">$21.35</div><div class="t pt" style="left:386px;top:201px">0</div>
<div class="t pt" style="left:41px;top:215px">Grandma's Boysenberry Spread</div><div class="t pt" style="left:204px;top:215px">Condiments</div><div class="t pt" style="left:306px;top:215px">$25.00</div><div class="t pt" style="left:386px;top:215px">120</div>
<div class="t pt" style="left:41px;top:228px">Uncle Bob's Organic Dried Pears</div><div class="t pt" style="left:204px;top:228px">Produce</div><div class="t pt" style="left:306px;top:228px">$30.00</div><div class="t pt" style="left:386px;top:228px">15</div>
<div class="t pt" style="left:41px;top:242px">Northwoods Cranberry Sauce</div><div class="t pt" style="left:204px;top:242px">Condiments</div><div class="t pt" style="left:306px;top:242px">$40.00</div><div class="t pt" style="left:386px;top:242px">6</div>
<div class="t pt" style="left:41px;top:255px">Mishi Kobe Niku</div><div class="t pt" style="left:204px;top:255px">Meat/Poultry</div><div class="t pt" style="left:306px;top:255px">$97.00</div><div class="t pt" style="left:386px;top:255px">29</div>
<div class="t pt" style="left:41px;top:269px">Ikura</div><div class="t pt" style="left:204px;top:269px">Seafood</div><div class="t pt" style="left:306px;top:269px">$31.00</div><div class="t pt" style="left:386px;top:269px">31</div>
<div class="t pt" style="left:41px;top:282px">Queso Cabrales</div><div class="t pt" style="left:204px;top:282px">Dairy Products</div><div class="t pt" style="left:306px;top:282px">$21.00</div><div class="t pt" style="left:386px;top:282px">22</div>
<div class="t pt" style="left:41px;top:296px">Queso Manchego La Pastora</div><div class="t pt" style="left:204px;top:296px">Dairy Products</div><div class="t pt" style="left:306px;top:296px">$38.00</div><div class="t pt" style="left:386px;top:296px">86</div>
<div class="t pt" style="left:41px;top:309px">Konbu</div><div class="t pt" style="left:204px;top:309px">Seafood</div><div class="t pt" style="left:306px;top:309px">$6.00</div><div class="t pt" style="left:386px;top:309px">24</div>
<div class="t pt" style="left:41px;top:323px">Tofu</div><div class="t pt" style="left:204px;top:323px">Produce</div><div class="t pt" style="left:306px;top:323px">$23.25</div><div class="t pt" style="left:386px;top:323px">35</div>
<div class="t pt" style="left:41px;top:336px">Genen Shouyu</div><div class="t pt" style="left:204px;top:336px">Condiments</div><div class="t pt" style="left:306px;top:336px">$15.50</div><div class="t pt" style="left:386px;top:336px">39</div>
<div class="t pt" style="left:41px;top:349px">Pavlova</div><div class="t pt" style="left:204px;top:349px">Confections</div><div class="t pt" style="left:306px;top:349px">$17.45</div><div class="t pt" style="left:386px;top:349px">29</div>
<div class="t pt" style="left:41px;top:363px">Alice Mutton</div><div class="t pt" style="left:204px;top:363px">Meat/Poultry</div><div class="t pt" style="left:306px;top:363px">$39.00</div><div class="t pt" style="left:386px;top:363px">0</div>
<div class="t pt" style="left:41px;top:376px">Carnarvon Tigers</div><div class="t pt" style="left:204px;top:376px">Seafood</div><div class="t pt" style="left:306px;top:376px">$62.50</div><div class="t pt" style="left:386px;top:376px">42</div>
<div class="t pt" style="left:41px;top:390px">Teatime Chocolate Biscuits</div><div class="t pt" style="left:204px;top:390px">Confections</div><div class="t pt" style="left:306px;top:390px">$9.20</div><div class="t pt" style="left:386px;top:390px">25</div>
<div class="t pt" style="left:41px;top:403px">Sir Rodney's Marmalade</div><div class="t pt" style="left:204px;top:403px">Confections</div><div class="t pt" style="left:306px;top:403px">$81.00</div><div class="t pt" style="left:386px;top:403px">40</div>
<div class="t pt" style="left:41px;top:417px">Sir Rodney's Scones</div><div class="t pt" style="left:204px;top:417px">Confections</div><div class="t pt" style="left:306px;top:417px">$10.00</div><div class="t pt" style="left:386px;top:417px">3</div>
<div class="t pt" style="left:41px;top:430px">Gustaf's Knäckebröd</div><div class="t pt" style="left:204px;top:430px">Grains/Cereals</div><div class="t pt" style="left:306px;top:430px">$21.00</div><div class="t pt" style="left:386px;top:430px">104</div>
<div class="t pt" style="left:41px;top:444px">Tunnbröd</div><div class="t pt" style="left:204px;top:444px">Grains/Cereals</div><div class="t pt" style="left:306px;top:444px">$9.00</div><div class="t pt" style="left:386px;top:444px">61</div>
<div class="t pt" style="left:41px;top:457px">Guaraná Fantástica</div><div class="t pt" style="left:204px;top:457px">Beverages</div><div class="t pt" style="left:306px;top:457px">$4.50</div><div class="t pt" style="left:386px;top:457px">20</div>
<div class="t pt" style="left:41px;top:471px">NuNuCa Nuß-Nougat-Creme</div><div class="t pt" style="left:204px;top:471px">Confections</div><div class="t pt" style="left:306px;top:471px">$14.00</div><div class="t pt" style="left:386px;top:471px">76</div>
<div class="t pt" style="left:41px;top:484px">Gumbär Gummibärchen</div><div class="t pt" style="left:204px;top:484px">Confections</div><div class="t pt" style="left:306px;top:484px">$31.23</div><div class="t pt" style="left:386px;top:484px">15</div>
<div class="t pt" style="left:41px;top:498px">Schoggi Schokolade</div><div class="t pt" style="left:204px;top:498px">Confections</div><div class="t pt" style="left:306px;top:498px">$43.90</div><div class="t pt" style="left:386px;top:498px">49</div>
<div class="t pt" style="left:41px;top:511px">Rössle Sauerkraut</div><div class="t pt" style="left:204px;top:511px">Produce</div><div class="t pt" style="left:306px;top:511px">$45.60</div><div class="t pt" style="left:386px;top:511px">26</div>
<div class="t pt" style="left:41px;top:525px">Thüringer Rostbratwurst</div><div class="t pt" style="left:204px;top:525px">Meat/Poultry</div><div class="t pt" style="left:306px;top:525px">$123.79</div><div class="t pt" style="left:386px;top:525px">0</div>
<div class="t pt" style="left:41px;top:538px">Nord-Ost Matjeshering</div><div class="t pt" style="left:204px;top:538px">Seafood</div><div class="t pt" style="left:306px;top:538px">$25.89</div><div class="t pt" style="left:386px;top:538px">10</div>
<div class="t pt" style="left:41px;top:552px">Gorgonzola Telino</div><div class="t pt" style="left:204px;top:552px">Dairy Products</div><div class="t pt" style="left:306px;top:552px">$12.50</div><div class="t pt" style="left:386px;top:552px">0</div>
<div class="t pt" style="left:41px;top:565px">Mascarpone Fabioli</div><div class="t pt" style="left:204px;top:565px">Dairy Products</div><div class="t pt" style="left:306px;top:565px">$32.00</div><div class="t pt" style="left:386px;top:565px">9</div>
<div class="t pt" style="left:41px;top:579px">Geitost</div><div class="t pt" style="left:204px;top:579px">Dairy Products</div><div class="t pt" style="left:306px;top:579px">$2.50</div><div class="t pt" style="left:386px;top:579px">112</div>
<div class="t pt" style="left:41px;top:592px">Sasquatch Ale</div><div class="t pt" style="left:204px;top:592px">Beverages</div><div class="t pt" style="left:306px;top:592px">$14.00</div><div class="t pt" style="left:386px;top:592px">111</div>
<div class="t pt" style="left:41px;top:606px">Steeleye Stout</div><div class="t pt" style="left:204px;top:606px">Beverages</div><div class="t pt" style="left:306px;top:606px">$18.00</div><div class="t pt" style="left:386px;top:606px">20</div>
<div class="t pt" style="left:41px;top:619px">Inlagd Sill</div><div class="t pt" style="left:204px;top:619px">Seafood</div><div class="t pt" style="left:306px;top:619px">$19.00</div><div class="t pt" style="left:386px;top:619px">112</div>
<div class="t pt" style="left:306px;top:633px">1053.16</div><div class="t pt" style="left:386px;top:633px">1393</div>
<div class="t pt c" style="left:0;top:656px;width:491px">Page 1/3</div></div>
<div class="a" style="left:383px;top:151px;width:93px;height:131px;border:1px solid #c6c6c6"></div>
<div class="t c" style="left:379px;top:287px;width:101px">1</div>
<div class="a" style="left:383px;top:312px;width:93px;height:131px;background:#fff;box-shadow:2px 2px 3px rgba(0,0,0,.35)"></div>
<div class="pg th" style="left:384.2px;top:313.7px"><div class="t ti" style="left:38.500px;top:64.500px;font-size:20px;line-height:26px;color:#000;letter-spacing:-.3px">Products</div>
<svg style="left:360px;top:30px" width="110" height="70" viewBox="360 30 110 70"><g stroke="#333" stroke-width="1.050" fill="none"><path d="M406 89L448.300 38.500M402 59.300L448.700 77.400M418.400 55.800L431.400 84.700"/></g><g fill="#7db8ea" stroke="#4a94d6" stroke-width=".6"><circle cx="448.300" cy="38.500" r="1.900"/><circle cx="402" cy="59.300" r="1.900"/><circle cx="418.400" cy="55.800" r="1.900"/><circle cx="406" cy="89" r="1.900"/><circle cx="431.400" cy="84.700" r="1.900"/><circle cx="448.700" cy="77.400" r="1.900"/></g><circle cx="456" cy="39" r="2.200" fill="none" stroke="#777" stroke-width=".6"/><text x="456" y="40.400" font-size="3.500" text-anchor="middle" fill="#555" font-family="Liberation Sans,sans-serif">R</text><text x="367.500" y="77.200" font-size="14" font-style="italic" fill="#2a2a2a" font-family="Liberation Sans,sans-serif" textLength="45" lengthAdjust="spacingAndGlyphs">combit</text></svg>
<div class="a" style="left:39px;top:132px;width:423px;height:14px;background:#0091db"></div>
<div class="a" style="left:39px;top:632px;width:423px;height:13px;background:#0091db"></div>
<div class="a l" style="left:39px;top:132px;width:423px;height:1px"></div>
<div class="a l" style="left:39px;top:146px;width:423px;height:1px"></div>
<div class="a l" style="left:39px;top:159px;width:423px;height:1px"></div>
<div class="a l" style="left:39px;top:173px;width:423px;height:1px"></div>
<div class="a l" style="left:39px;top:186px;width:423px;height:1px"></div>
<div class="a l" style="left:39px;top:200px;width:423px;height:1px"></div>
<div class="a l" style="left:39px;top:213px;width:423px;height:1px"></div>
<div class="a l" style="left:39px;top:227px;width:423px;height:1px"></div>
<div class="a l" style="left:39px;top:240px;width:423px;height:1px"></div>
<div class="a l" style="left:39px;top:254px;width:423px;height:1px"></div>
<div class="a l" style="left:39px;top:267px;width:423px;height:1px"></div>
<div class="a l" style="left:39px;top:281px;width:423px;height:1px"></div>
<div class="a l" style="left:39px;top:294px;width:423px;height:1px"></div>
<div class="a l" style="left:39px;top:308px;width:423px;height:1px"></div>
<div class="a l" style="left:39px;top:321px;width:423px;height:1px"></div>
<div class="a l" style="left:39px;top:335px;width:423px;height:1px"></div>
<div class="a l" style="left:39px;top:348px;width:423px;height:1px"></div>
<div class="a l" style="left:39px;top:362px;width:423px;height:1px"></div>
<div class="a l" style="left:39px;top:375px;width:423px;height:1px"></div>
<div class="a l" style="left:39px;top:389px;width:423px;height:1px"></div>
<div class="a l" style="left:39px;top:402px;width:423px;height:1px"></div>
<div class="a l" style="left:39px;top:416px;width:423px;height:1px"></div>
<div class="a l" style="left:39px;top:429px;width:423px;height:1px"></div>
<div class="a l" style="left:39px;top:443px;width:423px;height:1px"></div>
<div class="a l" style="left:39px;top:456px;width:423px;height:1px"></div>
<div class="a l" style="left:39px;top:470px;width:423px;height:1px"></div>
<div class="a l" style="left:39px;top:483px;width:423px;height:1px"></div>
<div class="a l" style="left:39px;top:497px;width:423px;height:1px"></div>
<div class="a l" style="left:39px;top:510px;width:423px;height:1px"></div>
<div class="a l" style="left:39px;top:524px;width:423px;height:1px"></div>
<div class="a l" style="left:39px;top:537px;width:423px;height:1px"></div>
<div class="a l" style="left:39px;top:551px;width:423px;height:1px"></div>
<div class="a l" style="left:39px;top:564px;width:423px;height:1px"></div>
<div class="a l" style="left:39px;top:578px;width:423px;height:1px"></div>
<div class="a l" style="left:39px;top:591px;width:423px;height:1px"></div>
<div class="a l" style="left:39px;top:605px;width:423px;height:1px"></div>
<div class="a l" style="left:39px;top:618px;width:423px;height:1px"></div>
<div class="a l" style="left:39px;top:632px;width:423px;height:1px"></div>
<div class="a l" style="left:39px;top:645px;width:423px;height:1px"></div>
<div class="a l" style="left:39px;top:132px;width:1px;height:514px"></div>
<div class="a l" style="left:202px;top:132px;width:1px;height:514px"></div>
<div class="a l" style="left:304px;top:132px;width:1px;height:514px"></div>
<div class="a l" style="left:384px;top:132px;width:1px;height:514px"></div>
<div class="a l" style="left:461px;top:132px;width:1px;height:514px"></div>
<div class="t pt" style="left:41px;top:134px">ProductName</div><div class="t pt" style="left:204px;top:134px">Category</div><div class="t pt" style="left:306px;top:134px">UnitPrice</div><div class="t pt" style="left:386px;top:134px">UnitsInStock</div>
<div class="t pt" style="left:41px;top:147px">Jack's New England Clam Chowder</div><div class="t pt" style="left:204px;top:147px">Seafood</div><div class="t pt" style="left:306px;top:147px">$9.65</div><div class="t pt" style="left:386px;top:147px">85</div>
<div class="t pt" style="left:41px;top:161px">Singaporean Hokkien Fried Mee</div><div class="t pt" style="left:204px;top:161px">Grains/Cereals</div><div class="t pt" style="left:306px;top:161px">$14.00</div><div class="t pt" style="left:386px;top:161px">26</div>
<div class="t pt" style="left:41px;top:174px">Ipoh Coffee</div><div class="t pt" style="left:204px;top:174px">Beverages</div><div class="t pt" style="left:306px;top:174px">$46.00</div><div class="t pt" style="left:386px;top:174px">17</div>
<div class="t pt" style="left:41px;top:188px">Gula Malacca</div><div class="t pt" style="left:204px;top:188px">Condiments</div><div class="t pt" style="left:306px;top:188px">$19.45</div><div class="t pt" style="left:386px;top:188px">27</div>
<div class="t pt" style="left:41px;top:201px">Rogede sild</div><div class="t pt" style="left:204px;top:201px">Seafood</div><div class="t pt" style="left:306px;top:201px">$9.50</div><div class="t pt" style="left:386px;top:201px">5</div>
<div class="t pt" style="left:41px;top:215px">Spegesild</div><div class="t pt" style="left:204px;top:215px">Seafood</div><div class="t pt" style="left:306px;top:215px">$12.00</div><div class="t pt" style="left:386px;top:215px">95</div>
<div class="t pt" style="left:41px;top:228px">Zaanse koeken</div><div class="t pt" style="left:204px;top:228px">Confections</div><div class="t pt" style="left:306px;top:228px">$9.50</div><div class="t pt" style="left:386px;top:228px">36</div>
<div class="t pt" style="left:41px;top:242px">Chocolade</div><div class="t pt" style="left:204px;top:242px">Confections</div><div class="t pt" style="left:306px;top:242px">$12.75</div><div class="t pt" style="left:386px;top:242px">15</div>
<div class="t pt" style="left:41px;top:255px">Maxilaku</div><div class="t pt" style="left:204px;top:255px">Confections</div><div class="t pt" style="left:306px;top:255px">$20.00</div><div class="t pt" style="left:386px;top:255px">10</div>
<div class="t pt" style="left:41px;top:269px">Valkoinen suklaa</div><div class="t pt" style="left:204px;top:269px">Confections</div><div class="t pt" style="left:306px;top:269px">$16.25</div><div class="t pt" style="left:386px;top:269px">65</div>
<div class="t pt" style="left:41px;top:282px">Manjimup Dried Apples</div><div class="t pt" style="left:204px;top:282px">Produce</div><div class="t pt" style="left:306px;top:282px">$53.00</div><div class="t pt" style="left:386px;top:282px">20</div>
<div class="t pt" style="left:41px;top:296px">Filo Mix</div><div class="t pt" style="left:204px;top:296px">Grains/Cereals</div><div class="t pt" style="left:306px;top:296px">$7.00</div><div class="t pt" style="left:386px;top:296px">38</div>
<div class="t pt" style="left:41px;top:309px">Perth Pasties</div><div class="t pt" style="left:204px;top:309px">Meat/Poultry</div><div class="t pt" style="left:306px;top:309px">$32.80</div><div class="t pt" style="left:386px;top:309px">0</div>
<div class="t pt" style="left:41px;top:323px">Tourtière</div><div class="t pt" style="left:204px;top:323px">Meat/Poultry</div><div class="t pt" style="left:306px;top:323px">$7.45</div><div class="t pt" style="left:386px;top:323px">21</div>
<div class="t pt" style="left:41px;top:336px">Pâté chinois</div><div class="t pt" style="left:204px;top:336px">Meat/Poultry</div><div class="t pt" style="left:306px;top:336px">$24.00</div><div class="t pt" style="left:386px;top:336px">115</div>
<div class="t pt" style="left:41px;top:349px">Gnocchi di nonna Alice</div><div class="t pt" style="left:204px;top:349px">Grains/Cereals</div><div class="t pt" style="left:306px;top:349px">$38.00</div><div class="t pt" style="left:386px;top:349px">21</div>
<div class="t pt" style="left:41px;top:363px">Ravioli Angelo</div><div class="t pt" style="left:204px;top:363px">Grains/Cereals</div><div class="t pt" style="left:306px;top:363px">$19.50</div><div class="t pt" style="left:386px;top:363px">36</div>
<div class="t pt" style="left:41px;top:376px">Escargots de Bourgogne</div><div class="t pt" style="left:204px;top:376px">Seafood</div><div class="t pt" style="left:306px;top:376px">$13.25</div><div class="t pt" style="left:386px;top:376px">62</div>
<div class="t pt" style="left:41px;top:390px">Raclette Courdavault</div><div class="t pt" style="left:204px;top:390px">Dairy Products</div><div class="t pt" style="left:306px;top:390px">$55.00</div><div class="t pt" style="left:386px;top:390px">79</div>
<div class="t pt" style="left:41px;top:403px">Camembert Pierrot</div><div class="t pt" style="left:204px;top:403px">Dairy Products</div><div class="t pt" style="left:306px;top:403px">$34.00</div><div class="t pt" style="left:386px;top:403px">19</div>
<div class="t pt" style="left:41px;top:417px">Sirop d'érable</div><div class="t pt" style="left:204px;top:417px">Condiments</div><div class="t pt" style="left:306px;top:417px">$28.50</div><div class="t pt" style="left:386px;top:417px">113</div>
<div class="t pt" style="left:41px;top:430px">Tarte au sucre</div><div class="t pt" style="left:204px;top:430px">Confections</div><div class="t pt" style="left:306px;top:430px">$49.30</div><div class="t pt" style="left:386px;top:430px">17</div>
<div class="t pt" style="left:41px;top:444px">Vegie-spread</div><div class="t pt" style="left:204px;top:444px">Condiments</div><div class="t pt" style="left:306px;top:444px">$43.90</div><div class="t pt" style="left:386px;top:444px">24</div>
<div class="t pt" style="left:41px;top:457px">Wimmers gute Semmelknödel</div><div class="t pt" style="left:204px;top:457px">Grains/Cereals</div><div class="t pt" style="left:306px;top:457px">$33.25</div><div class="t pt" style="left:386px;top:457px">22</div>
<div class="t pt" style="left:41px;top:471px">Louisiana Fiery Hot Pepper Sauce</div><div class="t pt" style="left:204px;top:471px">Condiments</div><div class="t pt" style="left:306px;top:471px">$21.05</div><div class="t pt" style="left:386px;top:471px">76</div>
<div class="t pt" style="left:41px;top:484px">Louisiana Hot Spiced Okra</div><div class="t pt" style="left:204px;top:484px">Condiments</div><div class="t pt" style="left:306px;top:484px">$17.00</div><div class="t pt" style="left:386px;top:484px">4</div>
<div class="t pt" style="left:41px;top:498px">Laughing Lumberjack Lager</div><div class="t pt" style="left:204px;top:498px">Beverages</div><div class="t pt" style="left:306px;top:498px">$14.00</div><div class="t pt" style="left:386px;top:498px">52</div>
<div class="t pt" style="left:41px;top:511px">Scottish Longbreads</div><div class="t pt" style="left:204px;top:511px">Confections</div><div class="t pt" style="left:306px;top:511px">$12.50</div><div class="t pt" style="left:386px;top:511px">6</div>
<div class="t pt" style="left:41px;top:525px">Gudbrandsdalsost</div><div class="t pt" style="left:204px;top:525px">Dairy Products</div><div class="t pt" style="left:306px;top:525px">$36.00</div><div class="t pt" style="left:386px;top:525px">26</div>
<div class="t pt" style="left:41px;top:538px">Outback Lager</div><div class="t pt" style="left:204px;top:538px">Beverages</div><div class="t pt" style="left:306px;top:538px">$15.00</div><div class="t pt" style="left:386px;top:538px">15</div>
<div class="t pt" style="left:41px;top:552px">Flotemysost</div><div class="t pt" style="left:204px;top:552px">Dairy Products</div><div class="t pt" style="left:306px;top:552px">$21.50</div><div class="t pt" style="left:386px;top:552px">26</div>
<div class="t pt" style="left:41px;top:565px">Mozzarella di Giovanni</div><div class="t pt" style="left:204px;top:565px">Dairy Products</div><div class="t pt" style="left:306px;top:565px">$34.80</div><div class="t pt" style="left:386px;top:565px">14</div>
<div class="t pt" style="left:41px;top:579px">Röd Kaviar</div><div class="t pt" style="left:204px;top:579px">Seafood</div><div class="t pt" style="left:306px;top:579px">$15.00</div><div class="t pt" style="left:386px;top:579px">101</div>
<div class="t pt" style="left:41px;top:592px">Longlife Tofu</div><div class="t pt" style="left:204px;top:592px">Produce</div><div class="t pt" style="left:306px;top:592px">$10.00</div><div class="t pt" style="left:386px;top:592px">4</div>
<div class="t pt" style="left:41px;top:606px">Rhönbräu Klosterbier</div><div class="t pt" style="left:204px;top:606px">Beverages</div><div class="t pt" style="left:306px;top:606px">$7.75</div><div class="t pt" style="left:386px;top:606px">125</div>
<div class="t pt" style="left:41px;top:619px">Lakkalikööri</div><div class="t pt" style="left:204px;top:619px">Beverages</div><div class="t pt" style="left:306px;top:619px">$18.00</div><div class="t pt" style="left:386px;top:619px">57</div>
<div class="t pt" style="left:306px;top:633px">1037.10</div><div class="t pt" style="left:386px;top:633px">1511</div>
<div class="t pt c" style="left:0;top:656px;width:491px">Page 2/3</div></div>
<div class="a" style="left:383px;top:312px;width:93px;height:131px;border:1px solid #c6c6c6"></div>
<div class="t c" style="left:379px;top:448px;width:101px">2</div>
<div class="a" style="left:383px;top:473px;width:93px;height:131px;background:#fff;box-shadow:2px 2px 3px rgba(0,0,0,.35)"></div>
<div class="pg th" style="left:384.2px;top:474.7px"><div class="t ti" style="left:38.500px;top:64.500px;font-size:20px;line-height:26px;color:#000;letter-spacing:-.3px">Products</div>
<svg style="left:360px;top:30px" width="110" height="70" viewBox="360 30 110 70"><g stroke="#333" stroke-width="1.050" fill="none"><path d="M406 89L448.300 38.500M402 59.300L448.700 77.400M418.400 55.800L431.400 84.700"/></g><g fill="#7db8ea" stroke="#4a94d6" stroke-width=".6"><circle cx="448.300" cy="38.500" r="1.900"/><circle cx="402" cy="59.300" r="1.900"/><circle cx="418.400" cy="55.800" r="1.900"/><circle cx="406" cy="89" r="1.900"/><circle cx="431.400" cy="84.700" r="1.900"/><circle cx="448.700" cy="77.400" r="1.900"/></g><circle cx="456" cy="39" r="2.200" fill="none" stroke="#777" stroke-width=".6"/><text x="456" y="40.400" font-size="3.500" text-anchor="middle" fill="#555" font-family="Liberation Sans,sans-serif">R</text><text x="367.500" y="77.200" font-size="14" font-style="italic" fill="#2a2a2a" font-family="Liberation Sans,sans-serif" textLength="45" lengthAdjust="spacingAndGlyphs">combit</text></svg>
<div class="a" style="left:39px;top:132px;width:423px;height:14px;background:#0091db"></div>
<div class="a" style="left:39px;top:200px;width:423px;height:13px;background:#0091db"></div>
<div class="a l" style="left:39px;top:132px;width:423px;height:1px"></div>
<div class="a l" style="left:39px;top:146px;width:423px;height:1px"></div>
<div class="a l" style="left:39px;top:159px;width:423px;height:1px"></div>
<div class="a l" style="left:39px;top:173px;width:423px;height:1px"></div>
<div class="a l" style="left:39px;top:186px;width:423px;height:1px"></div>
<div class="a l" style="left:39px;top:200px;width:423px;height:1px"></div>
<div class="a l" style="left:39px;top:213px;width:423px;height:1px"></div>
<div class="a l" style="left:39px;top:132px;width:1px;height:82px"></div>
<div class="a l" style="left:202px;top:132px;width:1px;height:82px"></div>
<div class="a l" style="left:304px;top:132px;width:1px;height:82px"></div>
<div class="a l" style="left:384px;top:132px;width:1px;height:82px"></div>
<div class="a l" style="left:461px;top:132px;width:1px;height:82px"></div>
<div class="t pt" style="left:41px;top:134px">ProductName</div><div class="t pt" style="left:204px;top:134px">Category</div><div class="t pt" style="left:306px;top:134px">UnitPrice</div><div class="t pt" style="left:386px;top:134px">UnitsInStock</div>
<div class="t pt" style="left:41px;top:147px">Original Frankfurter grüne Soße</div><div class="t pt" style="left:204px;top:147px">Condiments</div><div class="t pt" style="left:306px;top:147px">$13.00</div><div class="t pt" style="left:386px;top:147px">32</div>
<div class="t pt" style="left:41px;top:161px">Rhönbräu Klosterbier</div><div class="t pt" style="left:204px;top:161px">Beverages</div><div class="t pt" style="left:306px;top:161px">$7.75</div><div class="t pt" style="left:386px;top:161px">125</div>
<div class="t pt" style="left:41px;top:174px">Tunnbröd Extra</div><div class="t pt" style="left:204px;top:174px">Grains/Cereals</div><div class="t pt" style="left:306px;top:174px">$9.00</div><div class="t pt" style="left:386px;top:174px">61</div>
<div class="t pt" style="left:41px;top:188px">Chartreuse verte</div><div class="t pt" style="left:204px;top:188px">Beverages</div><div class="t pt" style="left:306px;top:188px">$18.00</div><div class="t pt" style="left:386px;top:188px">69</div>
<div class="t pt" style="left:306px;top:201px">40.00</div><div class="t pt" style="left:386px;top:201px">162</div>
<div class="t pt c" style="left:0;top:656px;width:491px">Page 3/3</div></div>
<div class="a" style="left:383px;top:473px;width:93px;height:131px;border:1px solid #c6c6c6"></div>
<div class="t c" style="left:379px;top:609px;width:101px">3</div>
<!-- main preview -->
<div class="a" style="left:505px;top:145px;width:1px;height:709px;background:#a0a0a0"></div>
<div class="a" style="left:506px;top:145px;width:1px;height:709px;background:#fff"></div>
<div class="a" style="left:507px;top:145px;width:499px;height:705px;background:#c0dcf4;border:1px solid #8ec0f0"></div>
<div class="a" style="left:510px;top:149px;width:493px;height:697px;background:#fff;border:1px solid #b8b8b8"></div>
<div class="pg" style="left:511px;top:150px"><div class="t ti" style="left:38.500px;top:64.500px;font-size:20px;line-height:26px;color:#000;letter-spacing:-.3px">Products</div>
<svg style="left:360px;top:30px" width="110" height="70" viewBox="360 30 110 70"><g stroke="#333" stroke-width="1.050" fill="none"><path d="M406 89L448.300 38.500M402 59.300L448.700 77.400M418.400 55.800L431.400 84.700"/></g><g fill="#7db8ea" stroke="#4a94d6" stroke-width=".6"><circle cx="448.300" cy="38.500" r="1.900"/><circle cx="402" cy="59.300" r="1.900"/><circle cx="418.400" cy="55.800" r="1.900"/><circle cx="406" cy="89" r="1.900"/><circle cx="431.400" cy="84.700" r="1.900"/><circle cx="448.700" cy="77.400" r="1.900"/></g><circle cx="456" cy="39" r="2.200" fill="none" stroke="#777" stroke-width=".6"/><text x="456" y="40.400" font-size="3.500" text-anchor="middle" fill="#555" font-family="Liberation Sans,sans-serif">R</text><text x="367.500" y="77.200" font-size="14" font-style="italic" fill="#2a2a2a" font-family="Liberation Sans,sans-serif" textLength="45" lengthAdjust="spacingAndGlyphs">combit</text></svg>
<div class="a" style="left:39px;top:132px;width:423px;height:14px;background:#0091db"></div>
<div class="a" style="left:39px;top:632px;width:423px;height:13px;background:#0091db"></div>
<div class="a l" style="left:39px;top:132px;width:423px;height:1px"></div>
<div class="a l" style="left:39px;top:146px;width:423px;height:1px"></div>
<div class="a l" style="left:39px;top:159px;width:423px;height:1px"></div>
<div class="a l" style="left:39px;top:173px;width:423px;height:1px"></div>
<div class="a l" style="left:39px;top:186px;width:423px;height:1px"></div>
<div class="a l" style="left:39px;top:200px;width:423px;height:1px"></div>
<div class="a l" style="left:39px;top:213px;width:423px;height:1px"></div>
<div class="a l" style="left:39px;top:227px;width:423px;height:1px"></div>
<div class="a l" style="left:39px;top:240px;width:423px;height:1px"></div>
<div class="a l" style="left:39px;top:254px;width:423px;height:1px"></div>
<div class="a l" style="left:39px;top:267px;width:423px;height:1px"></div>
<div class="a l" style="left:39px;top:281px;width:423px;height:1px"></div>
<div class="a l" style="left:39px;top:294px;width:423px;height:1px"></div>
<div class="a l" style="left:39px;top:308px;width:423px;height:1px"></div>
<div class="a l" style="left:39px;top:321px;width:423px;height:1px"></div>
<div class="a l" style="left:39px;top:335px;width:423px;height:1px"></div>
<div class="a l" style="left:39px;top:348px;width:423px;height:1px"></div>
<div class="a l" style="left:39px;top:362px;width:423px;height:1px"></div>
<div class="a l" style="left:39px;top:375px;width:423px;height:1px"></div>
<div class="a l" style="left:39px;top:389px;width:423px;height:1px"></div>
<div class="a l" style="left:39px;top:402px;width:423px;height:1px"></div>
<div class="a l" style="left:39px;top:416px;width:423px;height:1px"></div>
<div class="a l" style="left:39px;top:429px;width:423px;height:1px"></div>
<div class="a l" style="left:39px;top:443px;width:423px;height:1px"></div>
<div class="a l" style="left:39px;top:456px;width:423px;height:1px"></div>
<div class="a l" style="left:39px;top:470px;width:423px;height:1px"></div>
<div class="a l" style="left:39px;top:483px;width:423px;height:1px"></div>
<div class="a l" style="left:39px;top:497px;width:423px;height:1px"></div>
<div class="a l" style="left:39px;top:510px;width:423px;height:1px"></div>
<div class="a l" style="left:39px;top:524px;width:423px;height:1px"></div>
<div class="a l" style="left:39px;top:537px;width:423px;height:1px"></div>
<div class="a l" style="left:39px;top:551px;width:423px;height:1px"></div>
<div class="a l" style="left:39px;top:564px;width:423px;height:1px"></div>
<div class="a l" style="left:39px;top:578px;width:423px;height:1px"></div>
<div class="a l" style="left:39px;top:591px;width:423px;height:1px"></div>
<div class="a l" style="left:39px;top:605px;width:423px;height:1px"></div>
<div class="a l" style="left:39px;top:618px;width:423px;height:1px"></div>
<div class="a l" style="left:39px;top:632px;width:423px;height:1px"></div>
<div class="a l" style="left:39px;top:645px;width:423px;height:1px"></div>
<div class="a l" style="left:39px;top:132px;width:1px;height:514px"></div>
<div class="a l" style="left:202px;top:132px;width:1px;height:514px"></div>
<div class="a l" style="left:304px;top:132px;width:1px;height:514px"></div>
<div class="a l" style="left:384px;top:132px;width:1px;height:514px"></div>
<div class="a l" style="left:461px;top:132px;width:1px;height:514px"></div>
<div class="t pt" style="left:41px;top:134px">ProductName</div><div class="t pt" style="left:204px;top:134px">Category</div><div class="t pt" style="left:306px;top:134px">UnitPrice</div><div class="t pt" style="left:386px;top:134px">UnitsInStock</div>
<div class="t pt" style="left:41px;top:147px">Chai</div><div class="t pt" style="left:204px;top:147px">Beverages</div><div class="t pt" style="left:306px;top:147px">$18.00</div><div class="t pt" style="left:386px;top:147px">39</div>
<div class="t pt" style="left:41px;top:161px">Chang</div><div class="t pt" style="left:204px;top:161px">Beverages</div><div class="t pt" style="left:306px;top:161px">$19.00</div><div class="t pt" style="left:386px;top:161px">17</div>
<div class="t pt" style="left:41px;top:174px">Aniseed Syrup</div><div class="t pt" style="left:204px;top:174px">Condiments</div><div class="t pt" style="left:306px;top:174px">$10.00</div><div class="t pt" style="left:386px;top:174px">13</div>
<div class="t pt" style="left:41px;top:188px">Chef Anton's Cajun Seasoning</div><div class="t pt" style="left:204px;top:188px">Condiments</div><div class="t pt" style="left:306px;top:188px">$22.00</div><div class="t pt" style="left:386px;top:188px">53</div>
<div class="t pt" style="left:41px;top:201px">Chef Anton's Gumbo Mix</div><div class="t pt" style="left:204px;top:201px">Condiments</div><div class="t pt" style="left:306px;top:201px">$21.35</div><div class="t pt" style="left:386px;top:201px">0</div>
<div class="t pt" style="left:41px;top:215px">Grandma's Boysenberry Spread</div><div class="t pt" style="left:204px;top:215px">Condiments</div><div class="t pt" style="left:306px;top:215px">$25.00</div><div class="t pt" style="left:386px;top:215px">120</div>
<div class="t pt" style="left:41px;top:228px">Uncle Bob's Organic Dried Pears</div><div class="t pt" style="left:204px;top:228px">Produce</div><div class="t pt" style="left:306px;top:228px">$30.00</div><div class="t pt" style="left:386px;top:228px">15</div>
<div class="t pt" style="left:41px;top:242px">Northwoods Cranberry Sauce</div><div class="t pt" style="left:204px;top:242px">Condiments</div><div class="t pt" style="left:306px;top:242px">$40.00</div><div class="t pt" style="left:386px;top:242px">6</div>
<div class="t pt" style="left:41px;top:255px">Mishi Kobe Niku</div><div class="t pt" style="left:204px;top:255px">Meat/Poultry</div><div class="t pt" style="left:306px;top:255px">$97.00</div><div class="t pt" style="left:386px;top:255px">29</div>
<div class="t pt" style="left:41px;top:269px">Ikura</div><div class="t pt" style="left:204px;top:269px">Seafood</div><div class="t pt" style="left:306px;top:269px">$31.00</div><div class="t pt" style="left:386px;top:269px">31</div>
<div class="t pt" style="left:41px;top:282px">Queso Cabrales</div><div class="t pt" style="left:204px;top:282px">Dairy Products</div><div class="t pt" style="left:306px;top:282px">$21.00</div><div class="t pt" style="left:386px;top:282px">22</div>
<div class="t pt" style="left:41px;top:296px">Queso Manchego La Pastora</div><div class="t pt" style="left:204px;top:296px">Dairy Products</div><div class="t pt" style="left:306px;top:296px">$38.00</div><div class="t pt" style="left:386px;top:296px">86</div>
<div class="t pt" style="left:41px;top:309px">Konbu</div><div class="t pt" style="left:204px;top:309px">Seafood</div><div class="t pt" style="left:306px;top:309px">$6.00</div><div class="t pt" style="left:386px;top:309px">24</div>
<div class="t pt" style="left:41px;top:323px">Tofu</div><div class="t pt" style="left:204px;top:323px">Produce</div><div class="t pt" style="left:306px;top:323px">$23.25</div><div class="t pt" style="left:386px;top:323px">35</div>
<div class="t pt" style="left:41px;top:336px">Genen Shouyu</div><div class="t pt" style="left:204px;top:336px">Condiments</div><div class="t pt" style="left:306px;top:336px">$15.50</div><div class="t pt" style="left:386px;top:336px">39</div>
<div class="t pt" style="left:41px;top:349px">Pavlova</div><div class="t pt" style="left:204px;top:349px">Confections</div><div class="t pt" style="left:306px;top:349px">$17.45</div><div class="t pt" style="left:386px;top:349px">29</div>
<div class="t pt" style="left:41px;top:363px">Alice Mutton</div><div class="t pt" style="left:204px;top:363px">Meat/Poultry</div><div class="t pt" style="left:306px;top:363px">$39.00</div><div class="t pt" style="left:386px;top:363px">0</div>
<div class="t pt" style="left:41px;top:376px">Carnarvon Tigers</div><div class="t pt" style="left:204px;top:376px">Seafood</div><div class="t pt" style="left:306px;top:376px">$62.50</div><div class="t pt" style="left:386px;top:376px">42</div>
<div class="t pt" style="left:41px;top:390px">Teatime Chocolate Biscuits</div><div class="t pt" style="left:204px;top:390px">Confections</div><div class="t pt" style="left:306px;top:390px">$9.20</div><div class="t pt" style="left:386px;top:390px">25</div>
<div class="t pt" style="left:41px;top:403px">Sir Rodney's Marmalade</div><div class="t pt" style="left:204px;top:403px">Confections</div><div class="t pt" style="left:306px;top:403px">$81.00</div><div class="t pt" style="left:386px;top:403px">40</div>
<div class="t pt" style="left:41px;top:417px">Sir Rodney's Scones</div><div class="t pt" style="left:204px;top:417px">Confections</div><div class="t pt" style="left:306px;top:417px">$10.00</div><div class="t pt" style="left:386px;top:417px">3</div>
<div class="t pt" style="left:41px;top:430px">Gustaf's Knäckebröd</div><div class="t pt" style="left:204px;top:430px">Grains/Cereals</div><div class="t pt" style="left:306px;top:430px">$21.00</div><div class="t pt" style="left:386px;top:430px">104</div>
<div class="t pt" style="left:41px;top:444px">Tunnbröd</div><div class="t pt" style="left:204px;top:444px">Grains/Cereals</div><div class="t pt" style="left:306px;top:444px">$9.00</div><div class="t pt" style="left:386px;top:444px">61</div>
<div class="t pt" style="left:41px;top:457px">Guaraná Fantástica</div><div class="t pt" style="left:204px;top:457px">Beverages</div><div class="t pt" style="left:306px;top:457px">$4.50</div><div class="t pt" style="left:386px;top:457px">20</div>
<div class="t pt" style="left:41px;top:471px">NuNuCa Nuß-Nougat-Creme</div><div class="t pt" style="left:204px;top:471px">Confections</div><div class="t pt" style="left:306px;top:471px">$14.00</div><div class="t pt" style="left:386px;top:471px">76</div>
<div class="t pt" style="left:41px;top:484px">Gumbär Gummibärchen</div><div class="t pt" style="left:204px;top:484px">Confections</div><div class="t pt" style="left:306px;top:484px">$31.23</div><div class="t pt" style="left:386px;top:484px">15</div>
<div class="t pt" style="left:41px;top:498px">Schoggi Schokolade</div><div class="t pt" style="left:204px;top:498px">Confections</div><div class="t pt" style="left:306px;top:498px">$43.90</div><div class="t pt" style="left:386px;top:498px">49</div>
<div class="t pt" style="left:41px;top:511px">Rössle Sauerkraut</div><div class="t pt" style="left:204px;top:511px">Produce</div><div class="t pt" style="left:306px;top:511px">$45.60</div><div class="t pt" style="left:386px;top:511px">26</div>
<div class="t pt" style="left:41px;top:525px">Thüringer Rostbratwurst</div><div class="t pt" style="left:204px;top:525px">Meat/Poultry</div><div class="t pt" style="left:306px;top:525px">$123.79</div><div class="t pt" style="left:386px;top:525px">0</div>
<div class="t pt" style="left:41px;top:538px">Nord-Ost Matjeshering</div><div class="t pt" style="left:204px;top:538px">Seafood</div><div class="t pt" style="left:306px;top:538px">$25.89</div><div class="t pt" style="left:386px;top:538px">10</div>
<div class="t pt" style="left:41px;top:552px">Gorgonzola Telino</div><div class="t pt" style="left:204px;top:552px">Dairy Products</div><div class="t pt" style="left:306px;top:552px">$12.50</div><div class="t pt" style="left:386px;top:552px">0</div>
<div class="t pt" style="left:41px;top:565px">Mascarpone Fabioli</div><div class="t pt" style="left:204px;top:565px">Dairy Products</div><div class="t pt" style="left:306px;top:565px">$32.00</div><div class="t pt" style="left:386px;top:565px">9</div>
<div class="t pt" style="left:41px;top:579px">Geitost</div><div class="t pt" style="left:204px;top:579px">Dairy Products</div><div class="t pt" style="left:306px;top:579px">$2.50</div><div class="t pt" style="left:386px;top:579px">112</div>
<div class="t pt" style="left:41px;top:592px">Sasquatch Ale</div><div class="t pt" style="left:204px;top:592px">Beverages</div><div class="t pt" style="left:306px;top:592px">$14.00</div><div class="t pt" style="left:386px;top:592px">111</div>
<div class="t pt" style="left:41px;top:606px">Steeleye Stout</div><div class="t pt" style="left:204px;top:606px">Beverages</div><div class="t pt" style="left:306px;top:606px">$18.00</div><div class="t pt" style="left:386px;top:606px">20</div>
<div class="t pt" style="left:41px;top:619px">Inlagd Sill</div><div class="t pt" style="left:204px;top:619px">Seafood</div><div class="t pt" style="left:306px;top:619px">$19.00</div><div class="t pt" style="left:386px;top:619px">112</div>
<div class="t pt" style="left:306px;top:633px">1053.16</div><div class="t pt" style="left:386px;top:633px">1393</div>
<div class="t pt c" style="left:0;top:656px;width:491px">Page 1/3</div></div>
<div class="a" style="left:1009px;top:145px;width:1px;height:705px;background:#fff"></div>
<div class="a" style="left:1010px;top:145px;width:16px;height:705px;background:#f0f0f0"></div>
<svg style="left:1013px;top:151px" width="9" height="6" viewBox="0 0 9 6"><path d="M.9 5.400l3.600-3.900 3.600 3.900" fill="none" stroke="#505050" stroke-width="2"/></svg>
<div class="a" style="left:1010px;top:162px;width:15px;height:224px;background:#cdcdcd"></div>
<svg style="left:1013px;top:838px" width="9" height="6" viewBox="0 0 9 6"><path d="M.9 .8l3.600 3.900 3.600-3.900" fill="none" stroke="#505050" stroke-width="2"/></svg>
<div class="a" style="left:1026px;top:145px;width:1px;height:732px;background:#e6e6e6"></div>
<div class="a" style="left:1027px;top:145px;width:4px;height:732px;background:#f5f6f7"></div>
<div class="a" style="left:378px;top:850px;width:648px;height:4px;background:#f5f6f7"></div>
<div class="a" style="left:378px;top:854px;width:648px;height:23px;background:#fff"></div>
<div class="a" style="left:378px;top:854px;width:648px;height:1px;background:#9a9a9a"></div>
<div class="t c" style="letter-spacing:-0.126px;left:406px;top:857px;width:62px;color:#6e6e6e">Layout</div>
<div class="a" style="left:479px;top:856px;width:1px;height:16px;background:#8c8c8c"></div>
<div class="t" style="letter-spacing:-0.196px;left:484px;top:857px;color:#6e6e6e">Layout Preview</div>
<div class="a" style="left:565px;top:854px;width:89px;height:20px;background:#fff;border:1px solid #8c8c8c;border-top:none"></div>
<div class="t c" style="letter-spacing:-0.5px;left:565px;top:857px;width:89px">Preview</div>
<!-- Variables/Fields panel -->
<div class="a" style="left:1031px;top:145px;width:217px;height:731px;background:#fff"></div>
<div class="a" style="left:1031px;top:145px;width:217px;height:21px;background:#f5f6f7"></div>
<div class="t" style="letter-spacing:-0.246px;left:1033px;top:149px">Variables/Fields</div>
<svg style="left:1233px;top:151px" width="8" height="8" viewBox="0 0 8 8"><path d="M.7.700l6.600 6.600M7.300.7L.7 7.300" stroke="#000" stroke-width="1.800"/></svg>
<div class="a" style="left:1031px;top:166px;width:216px;height:22px;background:#fff;border:1px solid #7a7a7a"></div>
<div class="t" style="letter-spacing:-0.343px;left:1037px;top:170px;color:#666">Search Variables/Fields</div>
<svg style="left:1233px;top:174px" width="9" height="6" viewBox="0 0 9 6"><path d="M.5.700l4 4 4-4" fill="none" stroke="#444" stroke-width="1"/></svg>
<svg style="left:1230px;top:193px" width="13" height="13" viewBox="0 0 13 13"><path d="M0 0h13L8 6v7H5V6z" fill="#666"/></svg>
<div class="a" style="left:1042px;top:208px;width:0;height:424px;border-left:1px dotted #8a8a8a"></div>
<div class="a" style="left:1061px;top:208px;width:0;height:4px;border-left:1px dotted #8a8a8a"></div>
<div class="a" style="left:1061px;top:244px;width:0;height:4px;border-left:1px dotted #8a8a8a"></div>
<div class="a" style="left:1061px;top:280px;width:0;height:310px;border-left:1px dotted #8a8a8a"></div>
<div class="a" style="left:1036.0px;top:194.0px;width:11px;height:10px;background:#fff"></div><svg style="left:1037px;top:196px" width="9" height="6" viewBox="0 0 9 6"><path d="M.8.800l3.700 3.700L8.200.8" fill="none" stroke="#333" stroke-width="1.900"/></svg>
<div class="a" style="left:1049px;top:199px;width:4px;height:0;border-top:1px dotted #8a8a8a"></div>
<svg style="left:1055px;top:192px" width="13" height="14" viewBox="0 0 13 14"><path d="M10.500 8h1.300v5.500h-1.300z" fill="#fbe08a" stroke="#e9c659" stroke-width=".8"/><path d="M.5.500h10v13h-10z" fill="#fbe08a" stroke="#e9c659"/><text x="5.300" y="10.500" font-size="11" font-family="Liberation Serif,serif" text-anchor="middle" fill="#555">T</text></svg>
<div class="t" style="letter-spacing:-0.5px;left:1074px;top:192px">Variables</div>
<div class="a" style="left:1056.0px;top:212.0px;width:9px;height:12px;background:#fff"></div><svg style="left:1058.0px;top:213.0px" width="7" height="10" viewBox="0 0 7 10"><path d="M.9 1l4.300 3.900L.9 8.800" fill="none" stroke="#959595" stroke-width="1.800"/></svg>
<div class="a" style="left:1068px;top:217px;width:4px;height:0;border-top:1px dotted #8a8a8a"></div>
<svg style="left:1074px;top:210px" width="13" height="14" viewBox="0 0 13 14"><path d="M10.500 8h1.300v5.500h-1.300z" fill="#fbe08a" stroke="#e9c659" stroke-width=".8"/><path d="M.5.500h10v13h-10z" fill="#fbe08a" stroke="#e9c659"/></svg>
<div class="t" style="letter-spacing:-0.5px;left:1093px;top:210px">LL</div>
<div class="a" style="left:1036.0px;top:230.0px;width:11px;height:10px;background:#fff"></div><svg style="left:1037px;top:232px" width="9" height="6" viewBox="0 0 9 6"><path d="M.8.800l3.700 3.700L8.200.8" fill="none" stroke="#333" stroke-width="1.900"/></svg>
<div class="a" style="left:1049px;top:235px;width:4px;height:0;border-top:1px dotted #8a8a8a"></div>
<svg style="left:1055px;top:228px" width="13" height="14" viewBox="0 0 13 14"><path d="M10.500 8h1.300v5.500h-1.300z" fill="#fbe08a" stroke="#e9c659" stroke-width=".8"/><path d="M.5.500h10v13h-10z" fill="#fbe08a" stroke="#e9c659"/><rect x="3" y="4" width="4.500" height="5" fill="none" stroke="#555" stroke-width="1.200"/><path d="M2 6.500h6.500" stroke="#555" stroke-width="1.200"/></svg>
<div class="t" style="letter-spacing:-0.226px;left:1074px;top:228px">Project variables</div>
<div class="a" style="left:1056.0px;top:248.0px;width:9px;height:12px;background:#fff"></div><svg style="left:1058.0px;top:249.0px" width="7" height="10" viewBox="0 0 7 10"><path d="M.9 1l4.300 3.900L.9 8.800" fill="none" stroke="#959595" stroke-width="1.800"/></svg>
<div class="a" style="left:1068px;top:253px;width:4px;height:0;border-top:1px dotted #8a8a8a"></div>
<svg style="left:1074px;top:246px" width="13" height="14" viewBox="0 0 13 14"><path d="M10.500 8h1.300v5.500h-1.300z" fill="#fbe08a" stroke="#e9c659" stroke-width=".8"/><path d="M.5.500h10v13h-10z" fill="#fbe08a" stroke="#e9c659"/></svg>
<div class="t" style="letter-spacing:-0.5px;left:1093px;top:246px">@LLFAX</div>
<div class="a" style="left:1036.0px;top:266.0px;width:11px;height:10px;background:#fff"></div><svg style="left:1037px;top:268px" width="9" height="6" viewBox="0 0 9 6"><path d="M.8.800l3.700 3.700L8.200.8" fill="none" stroke="#333" stroke-width="1.900"/></svg>
<div class="a" style="left:1049px;top:271px;width:4px;height:0;border-top:1px dotted #8a8a8a"></div>
<svg style="left:1055px;top:264px" width="13" height="14" viewBox="0 0 13 14"><path d="M10.500 8h1.300v5.500h-1.300z" fill="#fbe08a" stroke="#e9c659" stroke-width=".8"/><path d="M.5.500h10v13h-10z" fill="#fbe08a" stroke="#e9c659"/><rect x="2.500" y="3.500" width="5" height="6" fill="#fff" stroke="#555"/><path d="M2.500 5.500h5M2.500 7.500h5M5 3.500v6" stroke="#555" stroke-width=".7"/></svg>
<div class="t" style="letter-spacing:-0.5px;left:1074px;top:264px">Fields</div>
<div class="a" style="left:1056.0px;top:284.0px;width:9px;height:12px;background:#fff"></div><svg style="left:1058.0px;top:285.0px" width="7" height="10" viewBox="0 0 7 10"><path d="M.9 1l4.300 3.900L.9 8.800" fill="none" stroke="#959595" stroke-width="1.800"/></svg>
<div class="a" style="left:1068px;top:289px;width:4px;height:0;border-top:1px dotted #8a8a8a"></div>
<svg style="left:1074px;top:282px" width="13" height="14" viewBox="0 0 13 14"><path d="M10.500 8h1.300v5.500h-1.300z" fill="#fbe08a" stroke="#e9c659" stroke-width=".8"/><path d="M.5.500h10v13h-10z" fill="#fbe08a" stroke="#e9c659"/></svg>
<div class="t" style="letter-spacing:-0.5px;left:1093px;top:282px">LL</div>
<div class="a" style="left:1056.0px;top:302.0px;width:9px;height:12px;background:#fff"></div><svg style="left:1058.0px;top:303.0px" width="7" height="10" viewBox="0 0 7 10"><path d="M.9 1l4.300 3.900L.9 8.800" fill="none" stroke="#959595" stroke-width="1.800"/></svg>
<div class="a" style="left:1068px;top:307px;width:4px;height:0;border-top:1px dotted #8a8a8a"></div>
<svg style="left:1074px;top:300px" width="13" height="14" viewBox="0 0 13 14"><path d="M10.500 8h1.300v5.500h-1.300z" fill="#fbe08a" stroke="#e9c659" stroke-width=".8"/><path d="M.5.500h10v13h-10z" fill="#fbe08a" stroke="#e9c659"/></svg>
<div class="t" style="letter-spacing:-0.229px;left:1093px;top:300px">Budget</div>
<div class="a" style="left:1056.0px;top:320.0px;width:9px;height:12px;background:#fff"></div><svg style="left:1058.0px;top:321.0px" width="7" height="10" viewBox="0 0 7 10"><path d="M.9 1l4.300 3.900L.9 8.800" fill="none" stroke="#959595" stroke-width="1.800"/></svg>
<div class="a" style="left:1068px;top:325px;width:4px;height:0;border-top:1px dotted #8a8a8a"></div>
<svg style="left:1074px;top:318px" width="13" height="14" viewBox="0 0 13 14"><path d="M10.500 8h1.300v5.500h-1.300z" fill="#fbe08a" stroke="#e9c659" stroke-width=".8"/><path d="M.5.500h10v13h-10z" fill="#fbe08a" stroke="#e9c659"/></svg>
<div class="t" style="letter-spacing:-0.143px;left:1093px;top:318px">BusinessActivityTime</div>
<div class="a" style="left:1056.0px;top:338.0px;width:9px;height:12px;background:#fff"></div><svg style="left:1058.0px;top:339.0px" width="7" height="10" viewBox="0 0 7 10"><path d="M.9 1l4.300 3.900L.9 8.800" fill="none" stroke="#959595" stroke-width="1.800"/></svg>
<div class="a" style="left:1068px;top:343px;width:4px;height:0;border-top:1px dotted #8a8a8a"></div>
<svg style="left:1074px;top:336px" width="13" height="14" viewBox="0 0 13 14"><path d="M10.500 8h1.300v5.500h-1.300z" fill="#fbe08a" stroke="#e9c659" stroke-width=".8"/><path d="M.5.500h10v13h-10z" fill="#fbe08a" stroke="#e9c659"/></svg>
<div class="t" style="letter-spacing:-0.326px;left:1093px;top:336px">Categories</div>
<div class="a" style="left:1056.0px;top:356.0px;width:9px;height:12px;background:#fff"></div><svg style="left:1058.0px;top:357.0px" width="7" height="10" viewBox="0 0 7 10"><path d="M.9 1l4.300 3.900L.9 8.800" fill="none" stroke="#959595" stroke-width="1.800"/></svg>
<div class="a" style="left:1068px;top:361px;width:4px;height:0;border-top:1px dotted #8a8a8a"></div>
<svg style="left:1074px;top:354px" width="13" height="14" viewBox="0 0 13 14"><path d="M10.500 8h1.300v5.500h-1.300z" fill="#fbe08a" stroke="#e9c659" stroke-width=".8"/><path d="M.5.500h10v13h-10z" fill="#fbe08a" stroke="#e9c659"/></svg>
<div class="t" style="letter-spacing:-0.223px;left:1093px;top:354px">ClimateData</div>
<div class="a" style="left:1056.0px;top:374.0px;width:9px;height:12px;background:#fff"></div><svg style="left:1058.0px;top:375.0px" width="7" height="10" viewBox="0 0 7 10"><path d="M.9 1l4.300 3.900L.9 8.800" fill="none" stroke="#959595" stroke-width="1.800"/></svg>
<div class="a" style="left:1068px;top:379px;width:4px;height:0;border-top:1px dotted #8a8a8a"></div>
<svg style="left:1074px;top:372px" width="13" height="14" viewBox="0 0 13 14"><path d="M10.500 8h1.300v5.500h-1.300z" fill="#fbe08a" stroke="#e9c659" stroke-width=".8"/><path d="M.5.500h10v13h-10z" fill="#fbe08a" stroke="#e9c659"/></svg>
<div class="t" style="letter-spacing:-0.214px;left:1093px;top:372px">Customers</div>
<div class="a" style="left:1056.0px;top:392.0px;width:9px;height:12px;background:#fff"></div><svg style="left:1058.0px;top:393.0px" width="7" height="10" viewBox="0 0 7 10"><path d="M.9 1l4.300 3.900L.9 8.800" fill="none" stroke="#959595" stroke-width="1.800"/></svg>
<div class="a" style="left:1068px;top:397px;width:4px;height:0;border-top:1px dotted #8a8a8a"></div>
<svg style="left:1074px;top:390px" width="13" height="14" viewBox="0 0 13 14"><path d="M10.500 8h1.300v5.500h-1.300z" fill="#fbe08a" stroke="#e9c659" stroke-width=".8"/><path d="M.5.500h10v13h-10z" fill="#fbe08a" stroke="#e9c659"/></svg>
<div class="t" style="letter-spacing:-0.384px;left:1093px;top:390px">Employees</div>
<div class="a" style="left:1056.0px;top:410.0px;width:9px;height:12px;background:#fff"></div><svg style="left:1058.0px;top:411.0px" width="7" height="10" viewBox="0 0 7 10"><path d="M.9 1l4.300 3.900L.9 8.800" fill="none" stroke="#959595" stroke-width="1.800"/></svg>
<div class="a" style="left:1068px;top:415px;width:4px;height:0;border-top:1px dotted #8a8a8a"></div>
<svg style="left:1074px;top:408px" width="13" height="14" viewBox="0 0 13 14"><path d="M10.500 8h1.300v5.500h-1.300z" fill="#fbe08a" stroke="#e9c659" stroke-width=".8"/><path d="M.5.500h10v13h-10z" fill="#fbe08a" stroke="#e9c659"/></svg>
<div class="t" style="letter-spacing:-0.281px;left:1093px;top:408px">Keyword</div>
<div class="a" style="left:1056.0px;top:428.0px;width:9px;height:12px;background:#fff"></div><svg style="left:1058.0px;top:429.0px" width="7" height="10" viewBox="0 0 7 10"><path d="M.9 1l4.300 3.900L.9 8.800" fill="none" stroke="#959595" stroke-width="1.800"/></svg>
<div class="a" style="left:1068px;top:433px;width:4px;height:0;border-top:1px dotted #8a8a8a"></div>
<svg style="left:1074px;top:426px" width="13" height="14" viewBox="0 0 13 14"><path d="M10.500 8h1.300v5.500h-1.300z" fill="#fbe08a" stroke="#e9c659" stroke-width=".8"/><path d="M.5.500h10v13h-10z" fill="#fbe08a" stroke="#e9c659"/></svg>
<div class="t" style="letter-spacing:-0.394px;left:1093px;top:426px">Order_Details</div>
<div class="a" style="left:1056.0px;top:446.0px;width:9px;height:12px;background:#fff"></div><svg style="left:1058.0px;top:447.0px" width="7" height="10" viewBox="0 0 7 10"><path d="M.9 1l4.300 3.900L.9 8.800" fill="none" stroke="#959595" stroke-width="1.800"/></svg>
<div class="a" style="left:1068px;top:451px;width:4px;height:0;border-top:1px dotted #8a8a8a"></div>
<svg style="left:1074px;top:444px" width="13" height="14" viewBox="0 0 13 14"><path d="M10.500 8h1.300v5.500h-1.300z" fill="#fbe08a" stroke="#e9c659" stroke-width=".8"/><path d="M.5.500h10v13h-10z" fill="#fbe08a" stroke="#e9c659"/></svg>
<div class="t" style="letter-spacing:-0.478px;left:1093px;top:444px">Orders</div>
<div class="a" style="left:1056.0px;top:464.0px;width:9px;height:12px;background:#fff"></div><svg style="left:1058.0px;top:465.0px" width="7" height="10" viewBox="0 0 7 10"><path d="M.9 1l4.300 3.900L.9 8.800" fill="none" stroke="#959595" stroke-width="1.800"/></svg>
<div class="a" style="left:1068px;top:469px;width:4px;height:0;border-top:1px dotted #8a8a8a"></div>
<svg style="left:1074px;top:462px" width="13" height="14" viewBox="0 0 13 14"><path d="M10.500 8h1.300v5.500h-1.300z" fill="#fbe08a" stroke="#e9c659" stroke-width=".8"/><path d="M.5.500h10v13h-10z" fill="#fbe08a" stroke="#e9c659"/></svg>
<div class="t" style="letter-spacing:-0.272px;left:1093px;top:462px">Pollen</div>
<div class="a" style="left:1056.0px;top:482.0px;width:9px;height:12px;background:#fff"></div><svg style="left:1058.0px;top:483.0px" width="7" height="10" viewBox="0 0 7 10"><path d="M.9 1l4.300 3.900L.9 8.800" fill="none" stroke="#959595" stroke-width="1.800"/></svg>
<div class="a" style="left:1068px;top:487px;width:4px;height:0;border-top:1px dotted #8a8a8a"></div>
<svg style="left:1074px;top:480px" width="13" height="14" viewBox="0 0 13 14"><path d="M10.500 8h1.300v5.500h-1.300z" fill="#fbe08a" stroke="#e9c659" stroke-width=".8"/><path d="M.5.500h10v13h-10z" fill="#fbe08a" stroke="#e9c659"/></svg>
<div class="t" style="letter-spacing:-0.166px;left:1093px;top:480px">Products</div>
<div class="a" style="left:1056.0px;top:500.0px;width:9px;height:12px;background:#fff"></div><svg style="left:1058.0px;top:501.0px" width="7" height="10" viewBox="0 0 7 10"><path d="M.9 1l4.300 3.900L.9 8.800" fill="none" stroke="#959595" stroke-width="1.800"/></svg>
<div class="a" style="left:1068px;top:505px;width:4px;height:0;border-top:1px dotted #8a8a8a"></div>
<svg style="left:1074px;top:498px" width="13" height="14" viewBox="0 0 13 14"><path d="M10.500 8h1.300v5.500h-1.300z" fill="#fbe08a" stroke="#e9c659" stroke-width=".8"/><path d="M.5.500h10v13h-10z" fill="#fbe08a" stroke="#e9c659"/></svg>
<div class="t" style="letter-spacing:-0.177px;left:1093px;top:498px">Project</div>
<div class="a" style="left:1056.0px;top:518.0px;width:9px;height:12px;background:#fff"></div><svg style="left:1058.0px;top:519.0px" width="7" height="10" viewBox="0 0 7 10"><path d="M.9 1l4.300 3.900L.9 8.800" fill="none" stroke="#959595" stroke-width="1.800"/></svg>
<div class="a" style="left:1068px;top:523px;width:4px;height:0;border-top:1px dotted #8a8a8a"></div>
<svg style="left:1074px;top:516px" width="13" height="14" viewBox="0 0 13 14"><path d="M10.500 8h1.300v5.500h-1.300z" fill="#fbe08a" stroke="#e9c659" stroke-width=".8"/><path d="M.5.500h10v13h-10z" fill="#fbe08a" stroke="#e9c659"/></svg>
<div class="t" style="letter-spacing:-0.5px;left:1093px;top:516px">Sales</div>
<div class="a" style="left:1056.0px;top:536.0px;width:9px;height:12px;background:#fff"></div><svg style="left:1058.0px;top:537.0px" width="7" height="10" viewBox="0 0 7 10"><path d="M.9 1l4.300 3.900L.9 8.800" fill="none" stroke="#959595" stroke-width="1.800"/></svg>
<div class="a" style="left:1068px;top:541px;width:4px;height:0;border-top:1px dotted #8a8a8a"></div>
<svg style="left:1074px;top:534px" width="13" height="14" viewBox="0 0 13 14"><path d="M10.500 8h1.300v5.500h-1.300z" fill="#fbe08a" stroke="#e9c659" stroke-width=".8"/><path d="M.5.500h10v13h-10z" fill="#fbe08a" stroke="#e9c659"/></svg>
<div class="t" style="letter-spacing:-0.5px;left:1093px;top:534px">SalesStages</div>
<div class="a" style="left:1056.0px;top:554.0px;width:9px;height:12px;background:#fff"></div><svg style="left:1058.0px;top:555.0px" width="7" height="10" viewBox="0 0 7 10"><path d="M.9 1l4.300 3.900L.9 8.800" fill="none" stroke="#959595" stroke-width="1.800"/></svg>
<div class="a" style="left:1068px;top:559px;width:4px;height:0;border-top:1px dotted #8a8a8a"></div>
<svg style="left:1074px;top:552px" width="13" height="14" viewBox="0 0 13 14"><path d="M10.500 8h1.300v5.500h-1.300z" fill="#fbe08a" stroke="#e9c659" stroke-width=".8"/><path d="M.5.500h10v13h-10z" fill="#fbe08a" stroke="#e9c659"/></svg>
<div class="t" style="letter-spacing:-0.454px;left:1093px;top:552px">Shippers</div>
<div class="a" style="left:1056.0px;top:572.0px;width:9px;height:12px;background:#fff"></div><svg style="left:1058.0px;top:573.0px" width="7" height="10" viewBox="0 0 7 10"><path d="M.9 1l4.300 3.900L.9 8.800" fill="none" stroke="#959595" stroke-width="1.800"/></svg>
<div class="a" style="left:1068px;top:577px;width:4px;height:0;border-top:1px dotted #8a8a8a"></div>
<svg style="left:1074px;top:570px" width="13" height="14" viewBox="0 0 13 14"><path d="M10.500 8h1.300v5.500h-1.300z" fill="#fbe08a" stroke="#e9c659" stroke-width=".8"/><path d="M.5.500h10v13h-10z" fill="#fbe08a" stroke="#e9c659"/></svg>
<div class="t" style="letter-spacing:-0.379px;left:1093px;top:570px">Suppliers</div>
<div class="a" style="left:1056.0px;top:590.0px;width:9px;height:12px;background:#fff"></div><svg style="left:1058.0px;top:591.0px" width="7" height="10" viewBox="0 0 7 10"><path d="M.9 1l4.300 3.900L.9 8.800" fill="none" stroke="#959595" stroke-width="1.800"/></svg>
<div class="a" style="left:1068px;top:595px;width:4px;height:0;border-top:1px dotted #8a8a8a"></div>
<svg style="left:1074px;top:588px" width="13" height="14" viewBox="0 0 13 14"><path d="M10.500 8h1.300v5.500h-1.300z" fill="#fbe08a" stroke="#e9c659" stroke-width=".8"/><path d="M.5.500h10v13h-10z" fill="#fbe08a" stroke="#e9c659"/></svg>
<div class="t" style="letter-spacing:-0.5px;left:1093px;top:588px">Venue</div>
<div class="a" style="left:1043px;top:613px;width:11px;height:0;border-top:1px dotted #8a8a8a"></div>
<svg style="left:1055px;top:606px" width="13" height="14" viewBox="0 0 13 14"><path d="M10.500 8h1.300v5.500h-1.300z" fill="#fbe08a" stroke="#e9c659" stroke-width=".8"/><path d="M.5.500h10v13h-10z" fill="#fbe08a" stroke="#e9c659"/><text x="5.300" y="11" font-size="11" font-weight="bold" font-family="Liberation Serif,serif" text-anchor="middle" fill="#5a5a5a">Σ</text></svg>
<div class="t" style="letter-spacing:-0.369px;left:1074px;top:606px">Sum variables</div>
<div class="a" style="left:1043px;top:631px;width:11px;height:0;border-top:1px dotted #8a8a8a"></div>
<svg style="left:1055px;top:624px" width="13" height="14" viewBox="0 0 13 14"><path d="M10.500 8h1.300v5.500h-1.300z" fill="#fbe08a" stroke="#e9c659" stroke-width=".8"/><path d="M.5.500h10v13h-10z" fill="#fbe08a" stroke="#e9c659"/><circle cx="5" cy="5.500" r="1.500" fill="#555"/><path d="M2.500 10.500a2.500 2.500 0 0 1 5 0z" fill="#555"/></svg>
<div class="t" style="letter-spacing:-0.439px;left:1074px;top:624px">User variables</div>
<!-- status bar -->
<div class="a" style="left:0;top:876px;width:1248px;height:25px;background:#fff;border-top:1px solid #e0e0e0"></div>
<div class="t" style="letter-spacing:-0.5px;left:20.500px;top:882px">2.509, 11.712</div>
<div class="t" style="letter-spacing:-0.339px;left:249.7px;top:882px">Text "Page"</div>
<div class="t" style="left:316.5px;top:882px">-</div>
<div class="t" style="letter-spacing:-0.5px;left:326.4px;top:882px">0.000 in,</div>
<div class="t" style="letter-spacing:-0.5px;left:371.8px;top:882px">11.058 in</div>
<div class="t" style="left:422.4px;top:882px">-</div>
<div class="t" style="letter-spacing:-0.5px;left:433.6px;top:882px">8.269 in,</div>
<div class="t" style="letter-spacing:-0.5px;left:479px;top:882px">11.359 in</div>
<div class="t" style="left:529.3px;top:882px">=</div>
<div class="t" style="letter-spacing:-0.5px;left:543.8px;top:882px">8.269 in,</div>
<div class="t" style="letter-spacing:-0.5px;left:588px;top:882px">0.301 in</div>
<div class="t" style="letter-spacing:-0.5px;left:631px;top:882px">(Base)</div>
<div class="t" style="letter-spacing:-0.5px;left:1029px;top:882px">100%</div>
<svg style="left:1076px;top:879px" width="15" height="15" viewBox="0 0 15 15"><circle cx="7.500" cy="7.500" r="6.400" fill="#fff" stroke="#3b6fb5" stroke-width="1.500"/><path d="M4 7.500h7" stroke="#3b6fb5" stroke-width="1.600"/></svg>
<div class="a" style="left:1105px;top:885px;width:92px;height:4px;background:#e7e7e7;border:1px solid #d4d4d4"></div>
<svg style="left:1146px;top:879px" width="10" height="17" viewBox="0 0 10 17"><path d="M0 0h10v12.500l-5 4.500-5-4.500z" fill="#0a78d7"/></svg>
<div class="a" style="left:1110px;top:898px;width:1px;height:3px;background:#bbb"></div><div class="a" style="left:1151px;top:898px;width:1px;height:3px;background:#bbb"></div><div class="a" style="left:1192px;top:898px;width:1px;height:3px;background:#bbb"></div>
<svg style="left:1211px;top:879px" width="15" height="15" viewBox="0 0 15 15"><circle cx="7.500" cy="7.500" r="6.400" fill="#fff" stroke="#3b6fb5" stroke-width="1.500"/><path d="M4 7.500h7M7.500 4v7" stroke="#3b6fb5" stroke-width="1.600"/></svg>
<svg style="left:1238px;top:891px" width="9" height="9" viewBox="0 0 9 9"><g fill="#bdbdbd"><rect x="6" y="0" width="2" height="2"/><rect x="3" y="3" width="2" height="2"/><rect x="6" y="3" width="2" height="2"/><rect x="0" y="6" width="2" height="2"/><rect x="3" y="6" width="2" height="2"/><rect x="6" y="6" width="2" height="2"/></g></svg>
</body></html>
